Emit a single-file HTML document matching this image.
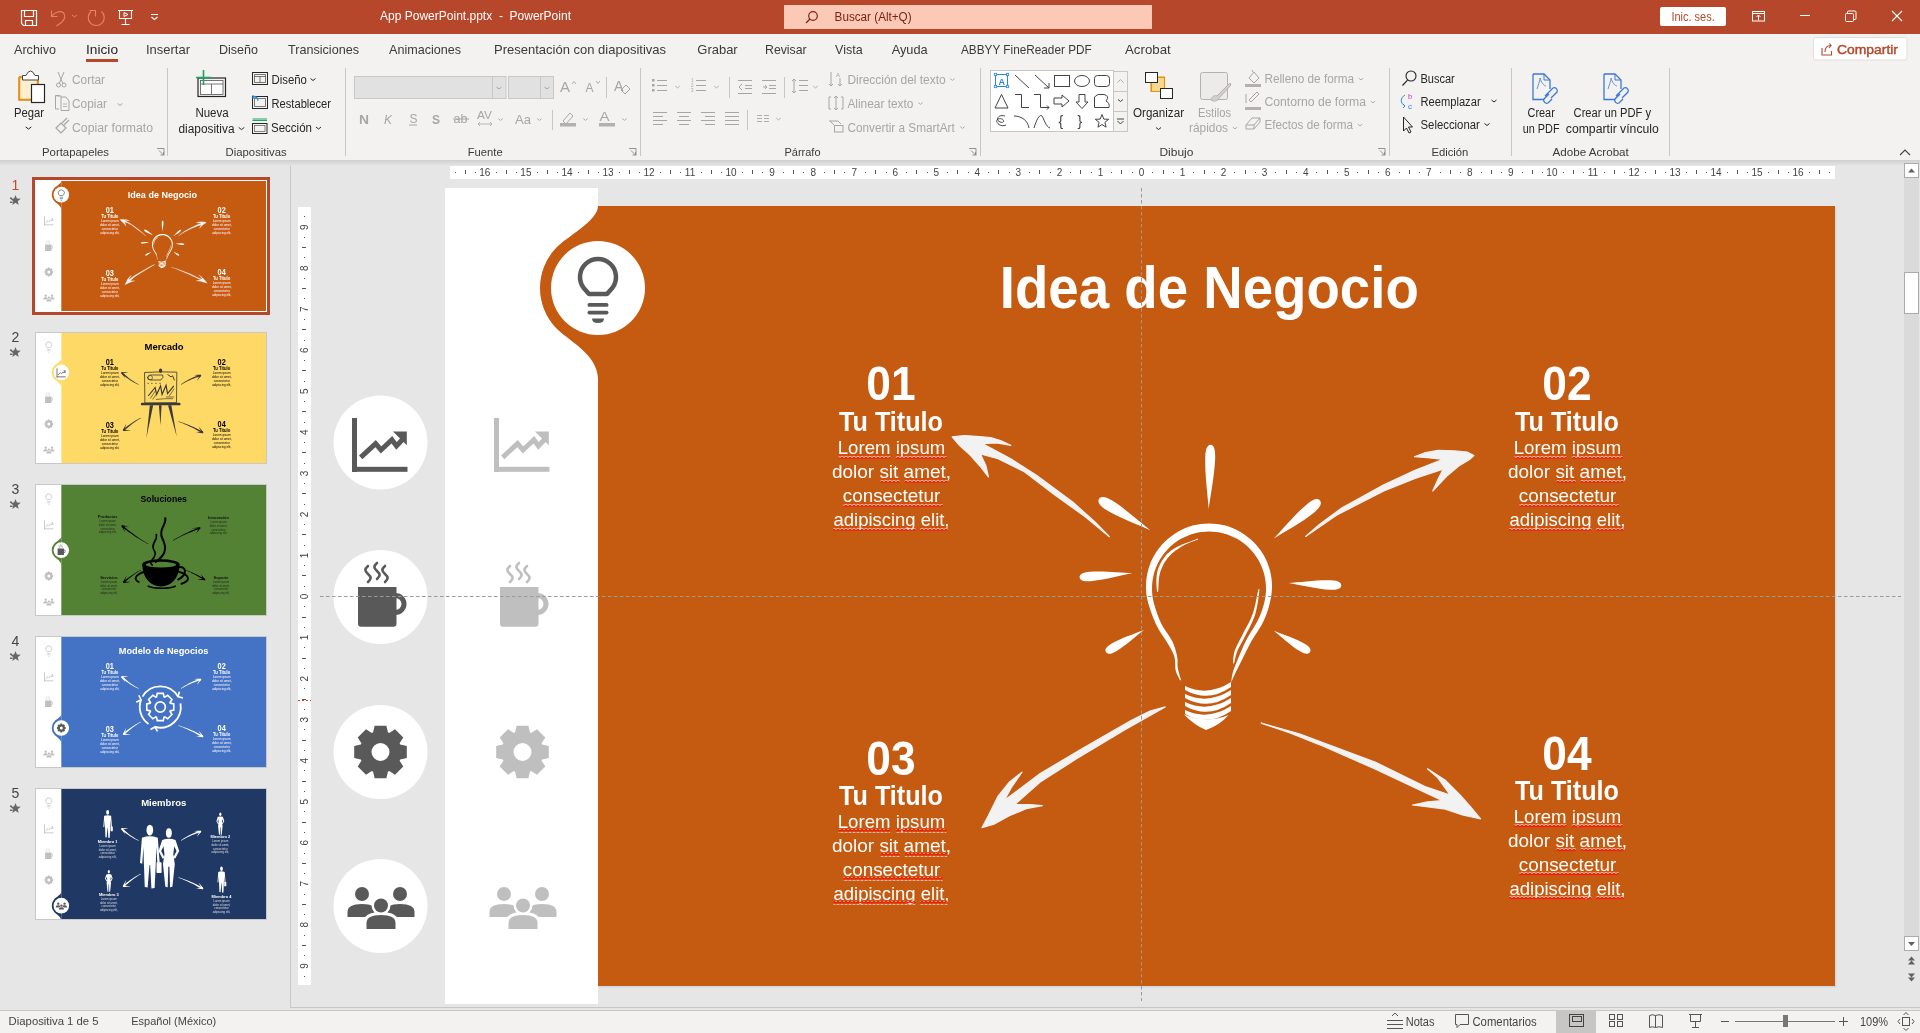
<!DOCTYPE html>
<html><head><meta charset="utf-8"><title>App PowerPoint</title>
<style>*{margin:0;padding:0}html,body{width:1920px;height:1033px;overflow:hidden;background:#E6E6E6;font-family:"Liberation Sans",sans-serif}</style>
</head><body><svg width="1920" height="1033" viewBox="0 0 1920 1033" style="position:absolute;left:0;top:0;will-change:transform"><defs>
<linearGradient id="shd" x1="0" y1="0" x2="0" y2="1"><stop offset="0" stop-color="#CFCFCF"/><stop offset="1" stop-color="#E6E6E6"/></linearGradient>
<pattern id="sq" width="4" height="4" patternUnits="userSpaceOnUse"><path d="M0 1.5 L2 0 L4 1.5" fill="none" stroke="#F6D9C8" stroke-width="0.9"/><path d="M0 3 L2 1.5 L4 3" fill="none" stroke="#FF1010" stroke-width="1.1"/></pattern>
<clipPath id="slc"><rect x="445" y="206" width="1390" height="780"/></clipPath>
<g id="s1"><rect x="445" y="206" width="1390" height="780" fill="#C55A11" /><rect x="445" y="206" width="153" height="780" fill="#FFFFFF" /><path d="M598 206 C598 221 566 237 556 248 A58 58 0 0 0 556 328 C566 339 598 354 598 379 Z" fill="#C55A11" /><circle cx="598" cy="288" r="47" fill="#FFFFFF" /><g transform="translate(598,277) scale(1)"><path d="M-9 17 L-14.5 10.7 A18 18 0 1 1 14.5 10.7 L9 17 Z" fill="none" stroke="#595959" stroke-width="4.5" stroke-linejoin="round"/><rect x="-10.5" y="26" width="21" height="3.8" fill="#595959" rx="1.9" /><rect x="-10.5" y="33.7" width="21" height="3.8" fill="#595959" rx="1.9" /><path d="M-6 41.5 H6 Q6 46 0 46 Q-6 46 -6 41.5 Z" fill="#595959" /></g><g transform="translate(522.5,442.5) scale(1)"><rect x="-28.5" y="-24.5" width="5" height="54" fill="#BFBFBF" /><rect x="-28.5" y="24.3" width="55.5" height="5" fill="#BFBFBF" /><path d="M-19.8 14.8 L-4.9 1.2 L0.5 7.5 L11.4 -2.8 L16 3.4 L22 -3" fill="none" stroke="#BFBFBF" stroke-width="5" stroke-linejoin="miter"/><path d="M12.5 -11 H26.3 V2.8 Z" fill="#BFBFBF" /></g><g transform="translate(522.5,597) scale(1)"><path d="M-22.5 -10 H16 V26.7 Q16 29.7 13 29.7 H-19.5 Q-22.5 29.7 -22.5 26.7 Z" fill="#BFBFBF" /><path d="M15 -1.5 A8.5 8.5 0 0 1 15 15.5" fill="none" stroke="#BFBFBF" stroke-width="5" /><path d="M-12.5 -15 C-9.0 -18 -9.0 -20 -12.5 -23 C-16.0 -26 -16.0 -28 -12.5 -31" fill="none" stroke="#BFBFBF" stroke-width="2.6" stroke-linecap="round"/><path d="M-3.5 -18 C0.0 -21 0.0 -23 -3.5 -26 C-7.0 -29 -7.0 -31 -3.5 -34" fill="none" stroke="#BFBFBF" stroke-width="2.6" stroke-linecap="round"/><path d="M4.5 -15 C8.0 -18 8.0 -20 4.5 -23 C1.0 -26 1.0 -28 4.5 -31" fill="none" stroke="#BFBFBF" stroke-width="2.6" stroke-linecap="round"/></g><g transform="translate(522.5,752) scale(1)"><path d="M19.7 -7.4 L26.3 -5.9 L26.3 5.9 L19.7 7.4 L19.1 8.7 L22.8 14.5 L14.5 22.8 L8.7 19.1 L7.4 19.7 L5.9 26.3 L-5.9 26.3 L-7.4 19.7 L-8.7 19.1 L-14.5 22.8 L-22.8 14.5 L-19.1 8.7 L-19.7 7.4 L-26.3 5.9 L-26.3 -5.9 L-19.7 -7.4 L-19.1 -8.7 L-22.8 -14.5 L-14.5 -22.8 L-8.7 -19.1 L-7.4 -19.7 L-5.9 -26.3 L5.9 -26.3 L7.4 -19.7 L8.7 -19.1 L14.5 -22.8 L22.8 -14.5 L19.1 -8.7 Z M9 0 A9 9 0 1 0 -9 0 A9 9 0 1 0 9 0 Z" fill="#BFBFBF" fill-rule="evenodd"/></g><g transform="translate(522.5,906) scale(1)"><circle cx="-18.5" cy="-12" r="7" fill="#BFBFBF" /><circle cx="19.5" cy="-12" r="7" fill="#BFBFBF" /><path d="M-33 11 V6 Q-33 -2 -18.5 -2 Q-4 -2 -4 6 V11 Z" fill="#BFBFBF" /><path d="M5 11 V6 Q5 -2 19.5 -2 Q34 -2 34 6 V11 Z" fill="#BFBFBF" /><circle cx="0.5" cy="-0.5" r="9.5" fill="#FFFFFF" /><path d="M-17 24 V17 Q-17 6 0.5 6 Q18 6 18 17 V24 Z" fill="#FFFFFF" /><circle cx="0.5" cy="-0.5" r="7" fill="#BFBFBF" /><path d="M-14 23 V17 Q-14 9 0.5 9 Q15 9 15 17 V23 Z" fill="#BFBFBF" /></g><text x="999.8" y="308.3" font-size="59.5" fill="#FFFFFF" font-family='"Liberation Sans", sans-serif' font-weight="bold" textLength="419" lengthAdjust="spacingAndGlyphs" >Idea de Negocio</text><text x="891" y="400.3" font-size="49" fill="#FFFFFF" font-family='"Liberation Sans", sans-serif' font-weight="bold" text-anchor="middle" textLength="49.3" lengthAdjust="spacingAndGlyphs" >01</text><text x="891" y="430.8" font-size="27" fill="#FFFFFF" font-family='"Liberation Sans", sans-serif' font-weight="bold" text-anchor="middle" textLength="104" lengthAdjust="spacingAndGlyphs" >Tu Titulo</text><text x="891.5" y="453.5" font-size="18.5" fill="#FFFFFF" font-family='"Liberation Sans", sans-serif' text-anchor="middle" textLength="107.5" lengthAdjust="spacingAndGlyphs" >Lorem ipsum</text><text x="891.5" y="477.5" font-size="18.5" fill="#FFFFFF" font-family='"Liberation Sans", sans-serif' text-anchor="middle" textLength="119" lengthAdjust="spacingAndGlyphs" >dolor sit amet,</text><text x="891.5" y="501.5" font-size="18.5" fill="#FFFFFF" font-family='"Liberation Sans", sans-serif' text-anchor="middle" textLength="97.6" lengthAdjust="spacingAndGlyphs" >consectetur</text><text x="891.5" y="525.5" font-size="18.5" fill="#FFFFFF" font-family='"Liberation Sans", sans-serif' text-anchor="middle" textLength="116" lengthAdjust="spacingAndGlyphs" >adipiscing elit,</text><rect x="838.5" y="454.8" width="51.7" height="4" fill="url(#sq)"/><rect x="895.8" y="454.8" width="50.6" height="4" fill="url(#sq)"/><rect x="880.5" y="478.8" width="19.3" height="4" fill="url(#sq)"/><rect x="904.7" y="478.8" width="42.7" height="4" fill="url(#sq)"/><rect x="843.2" y="502.8" width="99.3" height="4" fill="url(#sq)"/><rect x="833.5" y="526.8" width="82.0" height="4" fill="url(#sq)"/><rect x="919.9" y="526.8" width="27.9" height="4" fill="url(#sq)"/><text x="1567" y="400.3" font-size="49" fill="#FFFFFF" font-family='"Liberation Sans", sans-serif' font-weight="bold" text-anchor="middle" textLength="49.3" lengthAdjust="spacingAndGlyphs" >02</text><text x="1567" y="430.8" font-size="27" fill="#FFFFFF" font-family='"Liberation Sans", sans-serif' font-weight="bold" text-anchor="middle" textLength="104" lengthAdjust="spacingAndGlyphs" >Tu Titulo</text><text x="1567.5" y="453.5" font-size="18.5" fill="#FFFFFF" font-family='"Liberation Sans", sans-serif' text-anchor="middle" textLength="107.5" lengthAdjust="spacingAndGlyphs" >Lorem ipsum</text><text x="1567.5" y="477.5" font-size="18.5" fill="#FFFFFF" font-family='"Liberation Sans", sans-serif' text-anchor="middle" textLength="119" lengthAdjust="spacingAndGlyphs" >dolor sit amet,</text><text x="1567.5" y="501.5" font-size="18.5" fill="#FFFFFF" font-family='"Liberation Sans", sans-serif' text-anchor="middle" textLength="97.6" lengthAdjust="spacingAndGlyphs" >consectetur</text><text x="1567.5" y="525.5" font-size="18.5" fill="#FFFFFF" font-family='"Liberation Sans", sans-serif' text-anchor="middle" textLength="116" lengthAdjust="spacingAndGlyphs" >adipiscing elit,</text><rect x="1514.5" y="454.8" width="51.7" height="4" fill="url(#sq)"/><rect x="1571.8" y="454.8" width="50.6" height="4" fill="url(#sq)"/><rect x="1556.5" y="478.8" width="19.3" height="4" fill="url(#sq)"/><rect x="1580.7" y="478.8" width="42.7" height="4" fill="url(#sq)"/><rect x="1519.2" y="502.8" width="99.3" height="4" fill="url(#sq)"/><rect x="1509.5" y="526.8" width="82.0" height="4" fill="url(#sq)"/><rect x="1595.9" y="526.8" width="27.9" height="4" fill="url(#sq)"/><text x="891" y="774.5" font-size="49" fill="#FFFFFF" font-family='"Liberation Sans", sans-serif' font-weight="bold" text-anchor="middle" textLength="49.3" lengthAdjust="spacingAndGlyphs" >03</text><text x="891" y="805.0" font-size="27" fill="#FFFFFF" font-family='"Liberation Sans", sans-serif' font-weight="bold" text-anchor="middle" textLength="104" lengthAdjust="spacingAndGlyphs" >Tu Titulo</text><text x="891.5" y="827.7" font-size="18.5" fill="#FFFFFF" font-family='"Liberation Sans", sans-serif' text-anchor="middle" textLength="107.5" lengthAdjust="spacingAndGlyphs" >Lorem ipsum</text><text x="891.5" y="851.7" font-size="18.5" fill="#FFFFFF" font-family='"Liberation Sans", sans-serif' text-anchor="middle" textLength="119" lengthAdjust="spacingAndGlyphs" >dolor sit amet,</text><text x="891.5" y="875.7" font-size="18.5" fill="#FFFFFF" font-family='"Liberation Sans", sans-serif' text-anchor="middle" textLength="97.6" lengthAdjust="spacingAndGlyphs" >consectetur</text><text x="891.5" y="899.7" font-size="18.5" fill="#FFFFFF" font-family='"Liberation Sans", sans-serif' text-anchor="middle" textLength="116" lengthAdjust="spacingAndGlyphs" >adipiscing elit,</text><rect x="838.5" y="829.0" width="51.7" height="4" fill="url(#sq)"/><rect x="895.8" y="829.0" width="50.6" height="4" fill="url(#sq)"/><rect x="880.5" y="853.0" width="19.3" height="4" fill="url(#sq)"/><rect x="904.7" y="853.0" width="42.7" height="4" fill="url(#sq)"/><rect x="843.2" y="877.0" width="99.3" height="4" fill="url(#sq)"/><rect x="833.5" y="901.0" width="82.0" height="4" fill="url(#sq)"/><rect x="919.9" y="901.0" width="27.9" height="4" fill="url(#sq)"/><text x="1567" y="769.5" font-size="49" fill="#FFFFFF" font-family='"Liberation Sans", sans-serif' font-weight="bold" text-anchor="middle" textLength="49.3" lengthAdjust="spacingAndGlyphs" >04</text><text x="1567" y="800.0" font-size="27" fill="#FFFFFF" font-family='"Liberation Sans", sans-serif' font-weight="bold" text-anchor="middle" textLength="104" lengthAdjust="spacingAndGlyphs" >Tu Titulo</text><text x="1567.5" y="822.7" font-size="18.5" fill="#FFFFFF" font-family='"Liberation Sans", sans-serif' text-anchor="middle" textLength="107.5" lengthAdjust="spacingAndGlyphs" >Lorem ipsum</text><text x="1567.5" y="846.7" font-size="18.5" fill="#FFFFFF" font-family='"Liberation Sans", sans-serif' text-anchor="middle" textLength="119" lengthAdjust="spacingAndGlyphs" >dolor sit amet,</text><text x="1567.5" y="870.7" font-size="18.5" fill="#FFFFFF" font-family='"Liberation Sans", sans-serif' text-anchor="middle" textLength="97.6" lengthAdjust="spacingAndGlyphs" >consectetur</text><text x="1567.5" y="894.7" font-size="18.5" fill="#FFFFFF" font-family='"Liberation Sans", sans-serif' text-anchor="middle" textLength="116" lengthAdjust="spacingAndGlyphs" >adipiscing elit,</text><rect x="1514.5" y="824.0" width="51.7" height="4" fill="url(#sq)"/><rect x="1571.8" y="824.0" width="50.6" height="4" fill="url(#sq)"/><rect x="1556.5" y="848.0" width="19.3" height="4" fill="url(#sq)"/><rect x="1580.7" y="848.0" width="42.7" height="4" fill="url(#sq)"/><rect x="1519.2" y="872.0" width="99.3" height="4" fill="url(#sq)"/><rect x="1509.5" y="896.0" width="82.0" height="4" fill="url(#sq)"/><rect x="1595.9" y="896.0" width="27.9" height="4" fill="url(#sq)"/><path d="M1180.0 680.2 C1179.3 678.5 1176.5 674.1 1175.6 670.2 C1174.7 666.3 1175.8 661.4 1174.5 656.9 C1173.2 652.4 1170.8 648.7 1167.8 643.5 C1164.8 638.3 1160.0 632.5 1156.7 625.7 C1153.4 618.9 1149.9 609.3 1148.1 602.8 C1146.4 596.3 1146.0 591.9 1146.0 586.5 C1146.0 581.1 1146.7 575.4 1148.1 570.2 C1149.6 564.9 1151.7 559.7 1154.4 555.0 C1157.2 550.3 1160.6 545.8 1164.5 542.0 C1168.3 538.1 1172.8 534.7 1177.5 531.9 C1182.2 529.2 1187.4 527.1 1192.7 525.6 C1197.9 524.2 1203.6 523.5 1209.0 523.5 C1214.4 523.5 1220.1 524.2 1225.3 525.6 C1230.6 527.1 1235.8 529.2 1240.5 531.9 C1245.2 534.7 1249.7 538.1 1253.5 542.0 C1257.4 545.8 1260.8 550.3 1263.6 555.0 C1266.3 559.7 1268.4 564.9 1269.9 570.2 C1271.3 575.4 1272.0 581.1 1272.0 586.5 C1272.0 591.9 1271.3 597.0 1269.9 602.8 C1268.4 608.6 1266.8 614.5 1263.5 621.3 C1260.2 628.1 1253.9 636.8 1250.2 643.5 C1246.5 650.2 1243.9 656.1 1241.3 661.3 C1238.7 666.5 1236.3 671.2 1234.6 674.7 C1232.9 678.2 1231.8 681.2 1231.2 682.5 L1231.2 682.5 C1231.5 680.8 1231.7 676.3 1232.8 672.4 C1233.9 668.5 1235.8 664.3 1237.9 659.1 C1240.1 653.9 1242.4 647.8 1245.7 641.3 C1249.0 634.8 1254.9 626.4 1258.0 620.1 C1261.1 613.8 1262.7 608.5 1264.1 603.3 C1265.4 598.0 1266.0 593.4 1266.0 588.5 C1266.0 583.6 1265.3 578.5 1264.1 573.7 C1262.8 569.0 1260.8 564.3 1258.4 560.0 C1255.9 555.7 1252.8 551.7 1249.3 548.2 C1245.8 544.7 1241.8 541.6 1237.5 539.1 C1233.2 536.7 1228.5 534.7 1223.8 533.4 C1219.0 532.2 1213.9 531.5 1209.0 531.5 C1204.1 531.5 1199.0 532.2 1194.2 533.4 C1189.5 534.7 1184.8 536.7 1180.5 539.1 C1176.2 541.6 1172.2 544.7 1168.7 548.2 C1165.2 551.7 1162.1 555.7 1159.6 560.0 C1157.2 564.3 1155.2 569.0 1153.9 573.7 C1152.7 578.5 1152.0 583.6 1152.0 588.5 C1152.0 593.4 1152.4 597.4 1153.9 603.3 C1155.5 609.1 1158.1 617.2 1161.2 623.5 C1164.3 629.8 1169.6 635.7 1172.3 641.3 C1175.0 646.9 1176.3 652.4 1177.2 656.9 C1178.1 661.4 1177.1 664.1 1177.8 668.0 C1178.5 671.9 1180.6 678.2 1181.2 680.2 Z" fill="#FFFFFF" /><path d="M1157.9 592.0 L1158.3 589.9 L1158.4 587.0 L1158.6 583.5 L1158.8 579.9 L1159.2 576.4 L1159.9 573.3 L1160.8 570.6 L1161.9 567.8 L1163.1 565.2 L1164.5 562.6 L1166.1 560.2 L1167.7 558.0 L1169.5 556.0 L1171.4 554.1 L1173.4 552.3 L1175.6 550.6 L1178.0 548.9 L1180.4 547.3 L1183.3 545.6 L1186.5 543.9 L1190.0 542.5 L1193.3 541.2 L1196.1 540.2 L1198.1 539.4 L1197.9 538.6 L1195.8 539.4 L1193.0 540.5 L1189.7 541.7 L1186.2 543.1 L1182.6 544.3 L1179.6 545.7 L1176.9 547.1 L1174.3 548.6 L1171.8 550.1 L1169.5 551.9 L1167.3 553.8 L1165.3 556.0 L1163.5 558.4 L1161.8 561.0 L1160.3 563.8 L1159.0 566.6 L1157.9 569.6 L1157.1 572.7 L1156.6 576.0 L1156.4 579.7 L1156.4 583.5 L1156.6 587.0 L1156.8 589.9 L1157.1 592.0 Z" fill="#FFFFFF" /><path d="M1258.6 588.9 L1257.9 591.7 L1257.1 595.5 L1256.2 600.0 L1255.2 604.8 L1254.0 609.5 L1252.8 613.6 L1251.4 617.3 L1249.7 620.9 L1247.9 624.4 L1246.1 627.8 L1244.3 631.1 L1242.7 634.3 L1241.2 637.3 L1239.7 640.1 L1238.3 642.9 L1236.9 645.5 L1235.8 648.0 L1234.8 650.6 L1234.1 653.1 L1233.6 655.7 L1233.3 658.1 L1233.1 660.3 L1233.1 662.1 L1233.1 663.4 L1233.9 663.6 L1234.4 662.3 L1234.8 660.5 L1235.2 658.4 L1235.7 656.1 L1236.4 653.7 L1237.2 651.4 L1238.2 649.1 L1239.4 646.7 L1240.8 644.2 L1242.3 641.5 L1243.8 638.7 L1245.3 635.7 L1246.9 632.5 L1248.7 629.2 L1250.5 625.7 L1252.2 622.1 L1253.8 618.3 L1255.2 614.4 L1256.3 610.1 L1257.3 605.3 L1258.1 600.4 L1258.7 595.8 L1259.2 591.9 L1259.4 589.1 Z" fill="#FFFFFF" /><path d="M1185 686 Q1208 697 1231 682 V687 Q1208 703 1185 690 Z" fill="#FFFFFF" /><path d="M1185 694 Q1208 705 1231 690 V695 Q1208 711 1185 698 Z" fill="#FFFFFF" /><path d="M1185 702 Q1208 713 1231 698 V703 Q1208 719 1185 706 Z" fill="#FFFFFF" /><path d="M1185 710 Q1208 721 1231 706 V711 Q1208 727 1185 714 Z" fill="#FFFFFF" /><path d="M1184 714.5 Q1207 724 1228.6 715 Q1220 725 1206 730 Q1194 725 1184 714.5 Z" fill="#FFFFFF" /><path d="M1210.6 444.7 C1207.6 444.6 1205.5 448.4 1205.2 457.4 C1204.7 473.5 1207.8 496.1 1208.7 509.0 C1210.3 496.2 1214.7 473.8 1215.2 457.7 C1215.5 448.7 1213.6 444.8 1210.6 444.7 Z" fill="#FFFFFF" /><path d="M1099.0 499.0 C1097.3 501.8 1099.2 505.6 1106.4 510.0 C1119.3 517.8 1139.4 525.2 1150.4 530.3 C1140.8 522.9 1125.0 508.4 1112.1 500.6 C1104.9 496.2 1100.7 496.2 1099.0 499.0 Z" fill="#FFFFFF" /><path d="M1320.0 500.6 C1317.9 498.0 1313.7 498.6 1307.3 503.9 C1295.7 513.4 1282.2 529.9 1273.8 538.5 C1283.9 532.0 1302.7 521.9 1314.2 512.4 C1320.7 507.1 1322.1 503.2 1320.0 500.6 Z" fill="#FFFFFF" /><path d="M1079.6 577.3 C1079.8 580.1 1083.1 581.8 1090.5 581.2 C1103.7 580.1 1121.9 575.0 1132.3 573.0 C1121.7 572.7 1102.9 570.6 1089.8 571.7 C1082.4 572.3 1079.4 574.5 1079.6 577.3 Z" fill="#FFFFFF" /><path d="M1341.3 585.6 C1341.4 582.8 1338.4 580.7 1331.0 580.3 C1317.8 579.7 1299.2 582.3 1288.6 583.0 C1299.1 584.7 1317.4 589.2 1330.5 589.8 C1337.9 590.2 1341.2 588.4 1341.3 585.6 Z" fill="#FFFFFF" /><path d="M1106.0 652.0 C1107.4 654.3 1110.5 654.6 1115.8 651.5 C1125.3 646.0 1136.8 635.4 1143.8 630.0 C1135.7 633.4 1120.7 638.2 1111.3 643.7 C1106.0 646.8 1104.6 649.7 1106.0 652.0 Z" fill="#FFFFFF" /><path d="M1310.0 652.0 C1311.4 649.7 1310.1 646.8 1305.0 643.9 C1296.0 638.5 1281.6 634.0 1273.8 630.7 C1280.5 635.9 1291.4 646.3 1300.5 651.6 C1305.5 654.6 1308.6 654.3 1310.0 652.0 Z" fill="#FFFFFF" /><path d="M952.1 436.9 L964.2 435.5 L976.3 436.3 L990.8 437.5 L1000.5 440.6 L1010.8 445.4 L996.9 443.0 L982.3 443.6 L1012.6 459.9 L1036.8 475.6 L1073.0 502.3 L1095.0 522.0 L1109.4 536.7 L1085.2 516.8 L1054.9 495.0 L1024.7 472.0 L998.1 458.7 L980.5 453.9 L986.0 466.0 L988.4 476.9 L979.9 466.0 L970.2 455.1 L959.4 445.4 Z" fill="#F2F2F2" stroke="#F2F2F2" stroke-width="1.2" stroke-linejoin="round"/><path d="M1473.9 455.6 L1467.1 452.0 L1454.6 450.9 L1437.9 450.4 L1425.4 452.5 L1414.5 456.7 L1427.5 457.7 L1443.1 459.3 L1415.0 470.2 L1383.8 484.8 L1342.1 507.7 L1320.0 524.0 L1305.6 536.4 L1336.9 515.0 L1383.8 491.0 L1415.0 478.5 L1443.1 469.2 L1437.9 479.6 L1432.7 491.0 L1446.3 476.5 L1458.8 466.0 L1469.2 459.8 Z" fill="#F2F2F2" stroke="#F2F2F2" stroke-width="1.2" stroke-linejoin="round"/><path d="M981.9 827.7 L988.3 815.8 L998.1 796.1 L1009.3 782.1 L1022.0 772.2 L1012.1 786.3 L1004.4 800.3 L1040.2 773.6 L1082.3 748.4 L1131.5 720.3 L1150.0 711.0 L1165.2 706.9 L1124.5 730.1 L1075.3 759.6 L1040.2 782.1 L1014.9 804.5 L1029.0 804.5 L1042.3 805.6 L1026.2 808.7 L1009.3 815.8 L993.9 824.2 Z" fill="#F2F2F2" stroke="#F2F2F2" stroke-width="1.2" stroke-linejoin="round"/><path d="M1261.2 723.1 L1300.0 734.0 L1375.0 762.0 L1425.0 786.5 L1450.0 795.0 L1437.5 777.5 L1427.5 768.8 L1445.0 780.0 L1460.0 795.0 L1470.0 806.2 L1480.6 818.8 L1462.5 815.0 L1443.8 808.8 L1412.5 805.0 L1427.5 801.9 L1442.5 800.6 L1375.0 769.0 L1325.0 747.0 L1290.0 733.0 Z" fill="#F2F2F2" stroke="#F2F2F2" stroke-width="1.2" stroke-linejoin="round"/></g>
<g id="s2"><rect x="445" y="206" width="1390" height="780" fill="#FFD966" /><rect x="445" y="206" width="153" height="780" fill="#FFFFFF" /><path d="M598 360.5 C598 375.5 566 391.5 556 402.5 A58 58 0 0 0 556 482.5 C566 493.5 598 508.5 598 533.5 Z" fill="#FFD966" /><circle cx="598" cy="442.5" r="47" fill="#FFFFFF" /><g transform="translate(522.5,277) scale(1)"><path d="M-9 17 L-14.5 10.7 A18 18 0 1 1 14.5 10.7 L9 17 Z" fill="none" stroke="#BFBFBF" stroke-width="4.5" stroke-linejoin="round"/><rect x="-10.5" y="26" width="21" height="3.8" fill="#BFBFBF" rx="1.9" /><rect x="-10.5" y="33.7" width="21" height="3.8" fill="#BFBFBF" rx="1.9" /><path d="M-6 41.5 H6 Q6 46 0 46 Q-6 46 -6 41.5 Z" fill="#BFBFBF" /></g><g transform="translate(598,442.5) scale(1)"><rect x="-28.5" y="-24.5" width="5" height="54" fill="#595959" /><rect x="-28.5" y="24.3" width="55.5" height="5" fill="#595959" /><path d="M-19.8 14.8 L-4.9 1.2 L0.5 7.5 L11.4 -2.8 L16 3.4 L22 -3" fill="none" stroke="#595959" stroke-width="5" stroke-linejoin="miter"/><path d="M12.5 -11 H26.3 V2.8 Z" fill="#595959" /></g><g transform="translate(522.5,597) scale(1)"><path d="M-22.5 -10 H16 V26.7 Q16 29.7 13 29.7 H-19.5 Q-22.5 29.7 -22.5 26.7 Z" fill="#BFBFBF" /><path d="M15 -1.5 A8.5 8.5 0 0 1 15 15.5" fill="none" stroke="#BFBFBF" stroke-width="5" /><path d="M-12.5 -15 C-9.0 -18 -9.0 -20 -12.5 -23 C-16.0 -26 -16.0 -28 -12.5 -31" fill="none" stroke="#BFBFBF" stroke-width="2.6" stroke-linecap="round"/><path d="M-3.5 -18 C0.0 -21 0.0 -23 -3.5 -26 C-7.0 -29 -7.0 -31 -3.5 -34" fill="none" stroke="#BFBFBF" stroke-width="2.6" stroke-linecap="round"/><path d="M4.5 -15 C8.0 -18 8.0 -20 4.5 -23 C1.0 -26 1.0 -28 4.5 -31" fill="none" stroke="#BFBFBF" stroke-width="2.6" stroke-linecap="round"/></g><g transform="translate(522.5,752) scale(1)"><path d="M19.7 -7.4 L26.3 -5.9 L26.3 5.9 L19.7 7.4 L19.1 8.7 L22.8 14.5 L14.5 22.8 L8.7 19.1 L7.4 19.7 L5.9 26.3 L-5.9 26.3 L-7.4 19.7 L-8.7 19.1 L-14.5 22.8 L-22.8 14.5 L-19.1 8.7 L-19.7 7.4 L-26.3 5.9 L-26.3 -5.9 L-19.7 -7.4 L-19.1 -8.7 L-22.8 -14.5 L-14.5 -22.8 L-8.7 -19.1 L-7.4 -19.7 L-5.9 -26.3 L5.9 -26.3 L7.4 -19.7 L8.7 -19.1 L14.5 -22.8 L22.8 -14.5 L19.1 -8.7 Z M9 0 A9 9 0 1 0 -9 0 A9 9 0 1 0 9 0 Z" fill="#BFBFBF" fill-rule="evenodd"/></g><g transform="translate(522.5,906) scale(1)"><circle cx="-18.5" cy="-12" r="7" fill="#BFBFBF" /><circle cx="19.5" cy="-12" r="7" fill="#BFBFBF" /><path d="M-33 11 V6 Q-33 -2 -18.5 -2 Q-4 -2 -4 6 V11 Z" fill="#BFBFBF" /><path d="M5 11 V6 Q5 -2 19.5 -2 Q34 -2 34 6 V11 Z" fill="#BFBFBF" /><circle cx="0.5" cy="-0.5" r="9.5" fill="#FFFFFF" /><path d="M-17 24 V17 Q-17 6 0.5 6 Q18 6 18 17 V24 Z" fill="#FFFFFF" /><circle cx="0.5" cy="-0.5" r="7" fill="#BFBFBF" /><path d="M-14 23 V17 Q-14 9 0.5 9 Q15 9 15 17 V23 Z" fill="#BFBFBF" /></g><text x="1219" y="308" font-size="59.5" fill="#000000" font-family='"Liberation Sans", sans-serif' font-weight="bold" text-anchor="middle" textLength="236" lengthAdjust="spacingAndGlyphs" >Mercado</text><text x="891" y="400" font-size="49" fill="#000000" font-family='"Liberation Sans", sans-serif' font-weight="bold" text-anchor="middle" textLength="49.3" lengthAdjust="spacingAndGlyphs" >01</text><text x="891" y="430.5" font-size="27" fill="#000000" font-family='"Liberation Sans", sans-serif' font-weight="bold" text-anchor="middle" textLength="104" lengthAdjust="spacingAndGlyphs" >Tu Titulo</text><text x="891.5" y="453.2" font-size="18.5" fill="#000000" font-family='"Liberation Sans", sans-serif' text-anchor="middle" textLength="107.5" lengthAdjust="spacingAndGlyphs" >Lorem ipsum</text><text x="891.5" y="477.2" font-size="18.5" fill="#000000" font-family='"Liberation Sans", sans-serif' text-anchor="middle" textLength="119" lengthAdjust="spacingAndGlyphs" >dolor sit amet,</text><text x="891.5" y="501.2" font-size="18.5" fill="#000000" font-family='"Liberation Sans", sans-serif' text-anchor="middle" textLength="97.6" lengthAdjust="spacingAndGlyphs" >consectetur</text><text x="891.5" y="525.2" font-size="18.5" fill="#000000" font-family='"Liberation Sans", sans-serif' text-anchor="middle" textLength="116" lengthAdjust="spacingAndGlyphs" >adipiscing elit,</text><text x="1567" y="400" font-size="49" fill="#000000" font-family='"Liberation Sans", sans-serif' font-weight="bold" text-anchor="middle" textLength="49.3" lengthAdjust="spacingAndGlyphs" >02</text><text x="1567" y="430.5" font-size="27" fill="#000000" font-family='"Liberation Sans", sans-serif' font-weight="bold" text-anchor="middle" textLength="104" lengthAdjust="spacingAndGlyphs" >Tu Titulo</text><text x="1567.5" y="453.2" font-size="18.5" fill="#000000" font-family='"Liberation Sans", sans-serif' text-anchor="middle" textLength="107.5" lengthAdjust="spacingAndGlyphs" >Lorem ipsum</text><text x="1567.5" y="477.2" font-size="18.5" fill="#000000" font-family='"Liberation Sans", sans-serif' text-anchor="middle" textLength="119" lengthAdjust="spacingAndGlyphs" >dolor sit amet,</text><text x="1567.5" y="501.2" font-size="18.5" fill="#000000" font-family='"Liberation Sans", sans-serif' text-anchor="middle" textLength="97.6" lengthAdjust="spacingAndGlyphs" >consectetur</text><text x="1567.5" y="525.2" font-size="18.5" fill="#000000" font-family='"Liberation Sans", sans-serif' text-anchor="middle" textLength="116" lengthAdjust="spacingAndGlyphs" >adipiscing elit,</text><text x="891" y="774" font-size="49" fill="#000000" font-family='"Liberation Sans", sans-serif' font-weight="bold" text-anchor="middle" textLength="49.3" lengthAdjust="spacingAndGlyphs" >03</text><text x="891" y="804.5" font-size="27" fill="#000000" font-family='"Liberation Sans", sans-serif' font-weight="bold" text-anchor="middle" textLength="104" lengthAdjust="spacingAndGlyphs" >Tu Titulo</text><text x="891.5" y="827.2" font-size="18.5" fill="#000000" font-family='"Liberation Sans", sans-serif' text-anchor="middle" textLength="107.5" lengthAdjust="spacingAndGlyphs" >Lorem ipsum</text><text x="891.5" y="851.2" font-size="18.5" fill="#000000" font-family='"Liberation Sans", sans-serif' text-anchor="middle" textLength="119" lengthAdjust="spacingAndGlyphs" >dolor sit amet,</text><text x="891.5" y="875.2" font-size="18.5" fill="#000000" font-family='"Liberation Sans", sans-serif' text-anchor="middle" textLength="97.6" lengthAdjust="spacingAndGlyphs" >consectetur</text><text x="891.5" y="899.2" font-size="18.5" fill="#000000" font-family='"Liberation Sans", sans-serif' text-anchor="middle" textLength="116" lengthAdjust="spacingAndGlyphs" >adipiscing elit,</text><text x="1567" y="769" font-size="49" fill="#000000" font-family='"Liberation Sans", sans-serif' font-weight="bold" text-anchor="middle" textLength="49.3" lengthAdjust="spacingAndGlyphs" >04</text><text x="1567" y="799.5" font-size="27" fill="#000000" font-family='"Liberation Sans", sans-serif' font-weight="bold" text-anchor="middle" textLength="104" lengthAdjust="spacingAndGlyphs" >Tu Titulo</text><text x="1567.5" y="822.2" font-size="18.5" fill="#000000" font-family='"Liberation Sans", sans-serif' text-anchor="middle" textLength="107.5" lengthAdjust="spacingAndGlyphs" >Lorem ipsum</text><text x="1567.5" y="846.2" font-size="18.5" fill="#000000" font-family='"Liberation Sans", sans-serif' text-anchor="middle" textLength="119" lengthAdjust="spacingAndGlyphs" >dolor sit amet,</text><text x="1567.5" y="870.2" font-size="18.5" fill="#000000" font-family='"Liberation Sans", sans-serif' text-anchor="middle" textLength="97.6" lengthAdjust="spacingAndGlyphs" >consectetur</text><text x="1567.5" y="894.2" font-size="18.5" fill="#000000" font-family='"Liberation Sans", sans-serif' text-anchor="middle" textLength="116" lengthAdjust="spacingAndGlyphs" >adipiscing elit,</text><path d="M1101 443 Q1200 436 1296 441 L1294 624 L1103 626 Z" fill="none" stroke="#3A3A3A" stroke-width="5" /><ellipse cx="1198" cy="432" rx="10" ry="13" fill="#3A3A3A"/><path d="M1118 470 Q1125 455 1150 458 H1210 Q1220 470 1200 488 H1140 Q1118 490 1118 470 Z" fill="none" stroke="#3A3A3A" stroke-width="5" /><circle cx="1136" cy="474" r="13" fill="none" stroke="#3A3A3A" stroke-width="4" /><path d="M1240 455 L1262 470 L1270 462 L1282 490" fill="none" stroke="#3A3A3A" stroke-width="6" /><path d="M1123 584 L1165 533 L1174 575 L1198 523 L1207 575 L1231 519 L1240 570 L1278 523" fill="none" stroke="#3A3A3A" stroke-width="7" /><path d="M1135 600 L1170 548 M1150 605 L1185 555 M1250 585 L1280 540" fill="none" stroke="#3A3A3A" stroke-width="4" /><path d="M1118 508 H1128 M1140 508 H1150 M1165 508 H1175 M1190 508 H1200 M1230 590 H1280 M1170 605 Q1220 598 1273 600" fill="none" stroke="#3A3A3A" stroke-width="4" /><rect x="1079" y="624" width="239" height="16" fill="#3A3A3A" rx="7" /><path d="M1133 640 L1153 640 L1112 838 Z" fill="#3A3A3A" /><path d="M1188 640 L1204 640 L1197 762 Z" fill="#3A3A3A" /><path d="M1243 640 L1263 640 L1296 830 Z" fill="#3A3A3A" /><path d="M1065.7 513.7 L1056.5 508.8 L1047.6 503.8 L1038.8 498.5 L1030.2 493.0 L1021.8 487.4 L1013.5 481.4 L1005.4 475.3 L997.5 469.0 L989.7 462.4 L982.1 455.6 L974.7 448.6 L967.4 441.4 L960.6 448.6 L968.4 455.6 L976.4 462.3 L984.5 468.8 L992.8 475.0 L1001.2 481.0 L1009.8 486.8 L1018.5 492.3 L1027.4 497.6 L1036.4 502.6 L1045.6 507.4 L1054.9 512.0 L1064.3 516.3 Z" fill="#3A3A3A" /><path d="M964.2 449.5 L973.7 448.0 L983.1 446.4 L992.6 444.9 L1002.0 443.4 L1002.0 442.6 L992.4 442.1 L982.9 441.6 L973.3 441.0 L963.8 440.5 Z" fill="#3A3A3A" /><path d="M960.2 447.4 L966.3 455.1 L972.4 462.8 L978.5 470.5 L984.7 478.2 L985.3 477.8 L981.0 469.0 L976.6 460.2 L972.2 451.4 L967.8 442.6 Z" fill="#3A3A3A" /><circle cx="964" cy="445" r="4.5" fill="#3A3A3A" /><path d="M1322.8 516.3 L1332.1 510.6 L1341.4 505.3 L1350.8 500.2 L1360.4 495.3 L1370.0 490.7 L1379.8 486.4 L1389.6 482.3 L1399.6 478.5 L1409.6 475.0 L1419.8 471.7 L1430.0 468.6 L1440.4 465.8 L1437.6 456.2 L1427.2 459.6 L1416.9 463.3 L1406.7 467.2 L1396.7 471.4 L1386.8 475.8 L1377.0 480.5 L1367.4 485.4 L1357.9 490.6 L1348.5 496.0 L1339.3 501.7 L1330.2 507.6 L1321.2 513.7 Z" fill="#3A3A3A" /><path d="M1439.3 456.5 L1429.0 456.8 L1418.7 457.1 L1408.4 457.3 L1398.0 457.6 L1398.0 458.4 L1408.1 460.2 L1418.3 461.9 L1428.5 463.7 L1438.7 465.5 Z" fill="#3A3A3A" /><path d="M1435.3 458.5 L1430.9 466.8 L1426.5 475.1 L1422.1 483.5 L1417.7 491.8 L1418.3 492.2 L1424.4 485.0 L1430.5 477.9 L1436.6 470.7 L1442.7 463.5 Z" fill="#3A3A3A" /><circle cx="1439" cy="461" r="4.5" fill="#3A3A3A" /><path d="M1077.3 714.7 L1067.7 719.6 L1058.3 724.7 L1049.0 730.0 L1039.8 735.5 L1030.7 741.2 L1021.8 747.1 L1013.0 753.2 L1004.3 759.4 L995.7 765.9 L987.2 772.5 L978.8 779.3 L970.7 786.3 L977.3 793.7 L985.1 786.4 L992.9 779.2 L1000.9 772.3 L1009.0 765.5 L1017.2 758.8 L1025.6 752.4 L1034.1 746.1 L1042.7 740.0 L1051.5 734.1 L1060.4 728.3 L1069.5 722.7 L1078.7 717.3 Z" fill="#3A3A3A" /><path d="M978.1 791.7 L981.2 781.8 L984.3 772.0 L987.3 762.1 L990.4 752.2 L989.6 751.8 L984.7 760.9 L979.7 770.0 L974.8 779.2 L969.9 788.3 Z" fill="#3A3A3A" /><path d="M974.0 794.5 L984.2 793.5 L994.5 792.5 L1004.8 791.4 L1015.0 790.4 L1015.0 789.6 L1004.8 788.6 L994.5 787.5 L984.2 786.5 L974.0 785.5 Z" fill="#3A3A3A" /><circle cx="974" cy="790" r="4.5" fill="#3A3A3A" /><path d="M1305.5 738.4 L1318.1 743.1 L1330.5 747.9 L1342.9 753.0 L1355.1 758.2 L1367.3 763.7 L1379.3 769.3 L1391.3 775.2 L1403.1 781.2 L1414.9 787.4 L1426.5 793.9 L1438.0 800.5 L1449.5 807.3 L1454.5 798.7 L1442.6 792.3 L1430.7 786.1 L1418.6 780.1 L1406.5 774.3 L1394.3 768.8 L1382.0 763.4 L1369.6 758.2 L1357.1 753.3 L1344.6 748.6 L1332.0 744.0 L1319.3 739.7 L1306.5 735.6 Z" fill="#3A3A3A" /><path d="M1452.3 798.5 L1441.2 798.8 L1430.2 799.1 L1419.1 799.3 L1408.0 799.6 L1408.0 800.4 L1418.9 802.2 L1429.8 803.9 L1440.8 805.7 L1451.7 807.5 Z" fill="#3A3A3A" /><path d="M1455.7 800.5 L1448.9 792.3 L1442.0 784.1 L1435.2 775.9 L1428.3 767.8 L1427.7 768.2 L1432.8 777.6 L1438.0 786.9 L1443.1 796.2 L1448.3 805.5 Z" fill="#3A3A3A" /><circle cx="1452" cy="803" r="4.5" fill="#3A3A3A" /></g>
<g id="s3"><rect x="445" y="206" width="1390" height="780" fill="#548235" /><rect x="445" y="206" width="153" height="780" fill="#FFFFFF" /><path d="M598 515 C598 530 566 546 556 557 A58 58 0 0 0 556 637 C566 648 598 663 598 688 Z" fill="#548235" /><circle cx="598" cy="597" r="47" fill="#FFFFFF" /><g transform="translate(522.5,277) scale(1)"><path d="M-9 17 L-14.5 10.7 A18 18 0 1 1 14.5 10.7 L9 17 Z" fill="none" stroke="#BFBFBF" stroke-width="4.5" stroke-linejoin="round"/><rect x="-10.5" y="26" width="21" height="3.8" fill="#BFBFBF" rx="1.9" /><rect x="-10.5" y="33.7" width="21" height="3.8" fill="#BFBFBF" rx="1.9" /><path d="M-6 41.5 H6 Q6 46 0 46 Q-6 46 -6 41.5 Z" fill="#BFBFBF" /></g><g transform="translate(522.5,442.5) scale(1)"><rect x="-28.5" y="-24.5" width="5" height="54" fill="#BFBFBF" /><rect x="-28.5" y="24.3" width="55.5" height="5" fill="#BFBFBF" /><path d="M-19.8 14.8 L-4.9 1.2 L0.5 7.5 L11.4 -2.8 L16 3.4 L22 -3" fill="none" stroke="#BFBFBF" stroke-width="5" stroke-linejoin="miter"/><path d="M12.5 -11 H26.3 V2.8 Z" fill="#BFBFBF" /></g><g transform="translate(598,597) scale(1)"><path d="M-22.5 -10 H16 V26.7 Q16 29.7 13 29.7 H-19.5 Q-22.5 29.7 -22.5 26.7 Z" fill="#595959" /><path d="M15 -1.5 A8.5 8.5 0 0 1 15 15.5" fill="none" stroke="#595959" stroke-width="5" /><path d="M-12.5 -15 C-9.0 -18 -9.0 -20 -12.5 -23 C-16.0 -26 -16.0 -28 -12.5 -31" fill="none" stroke="#595959" stroke-width="2.6" stroke-linecap="round"/><path d="M-3.5 -18 C0.0 -21 0.0 -23 -3.5 -26 C-7.0 -29 -7.0 -31 -3.5 -34" fill="none" stroke="#595959" stroke-width="2.6" stroke-linecap="round"/><path d="M4.5 -15 C8.0 -18 8.0 -20 4.5 -23 C1.0 -26 1.0 -28 4.5 -31" fill="none" stroke="#595959" stroke-width="2.6" stroke-linecap="round"/></g><g transform="translate(522.5,752) scale(1)"><path d="M19.7 -7.4 L26.3 -5.9 L26.3 5.9 L19.7 7.4 L19.1 8.7 L22.8 14.5 L14.5 22.8 L8.7 19.1 L7.4 19.7 L5.9 26.3 L-5.9 26.3 L-7.4 19.7 L-8.7 19.1 L-14.5 22.8 L-22.8 14.5 L-19.1 8.7 L-19.7 7.4 L-26.3 5.9 L-26.3 -5.9 L-19.7 -7.4 L-19.1 -8.7 L-22.8 -14.5 L-14.5 -22.8 L-8.7 -19.1 L-7.4 -19.7 L-5.9 -26.3 L5.9 -26.3 L7.4 -19.7 L8.7 -19.1 L14.5 -22.8 L22.8 -14.5 L19.1 -8.7 Z M9 0 A9 9 0 1 0 -9 0 A9 9 0 1 0 9 0 Z" fill="#BFBFBF" fill-rule="evenodd"/></g><g transform="translate(522.5,906) scale(1)"><circle cx="-18.5" cy="-12" r="7" fill="#BFBFBF" /><circle cx="19.5" cy="-12" r="7" fill="#BFBFBF" /><path d="M-33 11 V6 Q-33 -2 -18.5 -2 Q-4 -2 -4 6 V11 Z" fill="#BFBFBF" /><path d="M5 11 V6 Q5 -2 19.5 -2 Q34 -2 34 6 V11 Z" fill="#BFBFBF" /><circle cx="0.5" cy="-0.5" r="9.5" fill="#FFFFFF" /><path d="M-17 24 V17 Q-17 6 0.5 6 Q18 6 18 17 V24 Z" fill="#FFFFFF" /><circle cx="0.5" cy="-0.5" r="7" fill="#BFBFBF" /><path d="M-14 23 V17 Q-14 9 0.5 9 Q15 9 15 17 V23 Z" fill="#BFBFBF" /></g><text x="1217" y="308" font-size="59.5" fill="#000000" font-family='"Liberation Sans", sans-serif' font-weight="bold" text-anchor="middle" textLength="280" lengthAdjust="spacingAndGlyphs" >Soluciones</text><text x="878" y="407" font-size="24" fill="#111111" font-family='"Liberation Sans", sans-serif' font-weight="bold" text-anchor="middle" >Productos</text><text x="878" y="431" font-size="17" fill="#111111" font-family='"Liberation Sans", sans-serif' text-anchor="middle" opacity="0.8">Lorem ipsum</text><text x="878" y="453" font-size="17" fill="#111111" font-family='"Liberation Sans", sans-serif' text-anchor="middle" opacity="0.8">dolor sit amet,</text><text x="878" y="475" font-size="17" fill="#111111" font-family='"Liberation Sans", sans-serif' text-anchor="middle" opacity="0.8">consectetur</text><text x="878" y="497" font-size="17" fill="#111111" font-family='"Liberation Sans", sans-serif' text-anchor="middle" opacity="0.8">adipiscing elit,</text><text x="1548" y="413" font-size="24" fill="#111111" font-family='"Liberation Sans", sans-serif' font-weight="bold" text-anchor="middle" >Innovación</text><text x="1548" y="437" font-size="17" fill="#111111" font-family='"Liberation Sans", sans-serif' text-anchor="middle" opacity="0.8">Lorem ipsum</text><text x="1548" y="459" font-size="17" fill="#111111" font-family='"Liberation Sans", sans-serif' text-anchor="middle" opacity="0.8">dolor sit amet,</text><text x="1548" y="481" font-size="17" fill="#111111" font-family='"Liberation Sans", sans-serif' text-anchor="middle" opacity="0.8">consectetur</text><text x="1548" y="503" font-size="17" fill="#111111" font-family='"Liberation Sans", sans-serif' text-anchor="middle" opacity="0.8">adipiscing elit,</text><text x="886" y="770" font-size="24" fill="#111111" font-family='"Liberation Sans", sans-serif' font-weight="bold" text-anchor="middle" >Servicios</text><text x="886" y="794" font-size="17" fill="#111111" font-family='"Liberation Sans", sans-serif' text-anchor="middle" opacity="0.8">Lorem ipsum</text><text x="886" y="816" font-size="17" fill="#111111" font-family='"Liberation Sans", sans-serif' text-anchor="middle" opacity="0.8">dolor sit amet,</text><text x="886" y="838" font-size="17" fill="#111111" font-family='"Liberation Sans", sans-serif' text-anchor="middle" opacity="0.8">consectetur</text><text x="886" y="860" font-size="17" fill="#111111" font-family='"Liberation Sans", sans-serif' text-anchor="middle" opacity="0.8">adipiscing elit,</text><text x="1563" y="770" font-size="24" fill="#111111" font-family='"Liberation Sans", sans-serif' font-weight="bold" text-anchor="middle" >Soporte</text><text x="1563" y="794" font-size="17" fill="#111111" font-family='"Liberation Sans", sans-serif' text-anchor="middle" opacity="0.8">Lorem ipsum</text><text x="1563" y="816" font-size="17" fill="#111111" font-family='"Liberation Sans", sans-serif' text-anchor="middle" opacity="0.8">dolor sit amet,</text><text x="1563" y="838" font-size="17" fill="#111111" font-family='"Liberation Sans", sans-serif' text-anchor="middle" opacity="0.8">consectetur</text><text x="1563" y="860" font-size="17" fill="#111111" font-family='"Liberation Sans", sans-serif' text-anchor="middle" opacity="0.8">adipiscing elit,</text><path d="M1070 790 C1020 770 1060 735 1110 725" fill="none" stroke="#000000" stroke-width="11" /><path d="M1300 725 C1370 740 1390 780 1320 800" fill="none" stroke="#000000" stroke-width="11" /><path d="M1120 812 C1160 830 1250 830 1290 812" fill="none" stroke="#000000" stroke-width="9" /><path d="M1087 682 C1090 770 1140 815 1200 815 C1260 815 1310 770 1313 682 Z" fill="#000000" /><path d="M1300 700 C1355 685 1365 745 1300 775" fill="none" stroke="#000000" stroke-width="12" /><ellipse cx="1200" cy="682" rx="113" ry="30" fill="#000"/><ellipse cx="1200" cy="684" rx="92" ry="17" fill="#548235"/><path d="M1150 690 C1110 660 1190 640 1160 600 C1130 560 1190 530 1170 500" fill="none" stroke="#000000" stroke-width="10" /><path d="M1165 670 C1225 630 1240 590 1210 530 C1180 470 1240 440 1225 400" fill="none" stroke="#000000" stroke-width="12" /><path d="M1123.5 559.1 L1109.8 550.9 L1096.2 542.5 L1082.8 533.9 L1069.5 525.1 L1056.3 516.2 L1043.3 507.0 L1030.4 497.7 L1017.6 488.2 L1005.0 478.6 L992.5 468.7 L980.1 458.7 L967.8 448.5 L962.2 455.5 L974.9 465.3 L987.7 474.9 L1000.6 484.4 L1013.7 493.6 L1026.9 502.7 L1040.2 511.6 L1053.6 520.3 L1067.2 528.8 L1080.8 537.1 L1094.6 545.2 L1108.5 553.1 L1122.5 560.9 Z" fill="#000000" /><path d="M964.7 456.0 L976.0 455.8 L987.4 455.7 L998.7 455.5 L1010.0 455.4 L1010.0 454.6 L998.8 453.0 L987.6 451.3 L976.5 449.7 L965.3 448.0 Z" fill="#000000" /><path d="M961.5 453.9 L967.3 462.9 L973.1 472.0 L978.8 481.1 L984.6 490.2 L985.4 489.8 L981.2 479.9 L976.9 470.0 L972.7 460.1 L968.5 450.1 Z" fill="#000000" /><circle cx="965" cy="452" r="4.05" fill="#000000" /><path d="M1273.5 539.9 L1286.6 532.8 L1299.8 525.9 L1313.1 519.2 L1326.5 512.7 L1339.9 506.4 L1353.5 500.4 L1367.1 494.5 L1380.8 488.8 L1394.6 483.4 L1408.5 478.1 L1422.5 473.1 L1436.5 468.2 L1433.5 459.8 L1419.5 465.2 L1405.6 470.8 L1391.9 476.7 L1378.2 482.7 L1364.6 488.9 L1351.2 495.4 L1337.8 502.0 L1324.5 508.8 L1311.4 515.9 L1298.3 523.1 L1285.4 530.5 L1272.5 538.1 Z" fill="#000000" /><path d="M1434.9 460.0 L1423.7 461.2 L1412.5 462.3 L1401.2 463.5 L1390.0 464.6 L1390.0 465.4 L1401.3 466.0 L1412.5 466.7 L1423.8 467.3 L1435.1 468.0 Z" fill="#000000" /><path d="M1431.7 461.8 L1426.7 470.8 L1421.7 479.8 L1416.7 488.8 L1411.7 497.8 L1412.3 498.2 L1418.8 490.2 L1425.3 482.2 L1431.8 474.2 L1438.3 466.2 Z" fill="#000000" /><circle cx="1435" cy="464" r="4.05" fill="#000000" /><path d="M1077.5 715.1 L1068.1 720.3 L1058.9 725.6 L1049.7 731.1 L1040.6 736.7 L1031.6 742.4 L1022.7 748.3 L1013.8 754.3 L1005.1 760.5 L996.5 766.8 L987.9 773.3 L979.4 779.9 L971.1 786.6 L976.9 793.4 L984.8 786.3 L992.8 779.4 L1000.9 772.5 L1009.1 765.8 L1017.4 759.2 L1025.9 752.8 L1034.4 746.5 L1043.0 740.3 L1051.7 734.2 L1060.5 728.3 L1069.5 722.5 L1078.5 716.9 Z" fill="#000000" /><path d="M977.6 791.7 L981.3 781.8 L985.0 771.9 L988.7 762.1 L992.4 752.2 L991.6 751.8 L986.3 760.9 L981.0 770.1 L975.7 779.2 L970.4 788.3 Z" fill="#000000" /><path d="M974.2 794.0 L985.1 792.6 L996.1 791.2 L1007.1 789.8 L1018.0 788.4 L1018.0 787.6 L1006.9 787.2 L995.9 786.8 L984.9 786.4 L973.8 786.0 Z" fill="#000000" /><circle cx="974" cy="790" r="4.05" fill="#000000" /><path d="M1347.6 716.9 L1357.6 721.2 L1367.5 725.6 L1377.2 730.2 L1387.0 734.9 L1396.6 739.8 L1406.1 744.8 L1415.6 749.9 L1424.9 755.2 L1434.2 760.7 L1443.4 766.2 L1452.6 772.0 L1461.7 777.8 L1466.3 770.2 L1456.9 764.7 L1447.4 759.5 L1437.8 754.3 L1428.1 749.3 L1418.4 744.5 L1408.6 739.9 L1398.7 735.3 L1388.8 731.0 L1378.8 726.8 L1368.7 722.7 L1358.6 718.8 L1348.4 715.1 Z" fill="#000000" /><path d="M1464.4 770.0 L1453.3 769.9 L1442.2 769.8 L1431.1 769.7 L1420.0 769.6 L1420.0 770.4 L1430.9 772.3 L1441.8 774.2 L1452.7 776.1 L1463.6 778.0 Z" fill="#000000" /><path d="M1467.2 771.6 L1460.5 764.1 L1453.8 756.7 L1447.0 749.2 L1440.3 741.8 L1439.7 742.2 L1445.0 750.8 L1450.2 759.3 L1455.5 767.9 L1460.8 776.4 Z" fill="#000000" /><circle cx="1464" cy="774" r="4.05" fill="#000000" /></g>
<g id="s4"><rect x="445" y="206" width="1390" height="780" fill="#4472C4" /><rect x="445" y="206" width="153" height="780" fill="#FFFFFF" /><path d="M598 670 C598 685 566 701 556 712 A58 58 0 0 0 556 792 C566 803 598 818 598 843 Z" fill="#4472C4" /><circle cx="598" cy="752" r="47" fill="#FFFFFF" /><g transform="translate(522.5,277) scale(1)"><path d="M-9 17 L-14.5 10.7 A18 18 0 1 1 14.5 10.7 L9 17 Z" fill="none" stroke="#BFBFBF" stroke-width="4.5" stroke-linejoin="round"/><rect x="-10.5" y="26" width="21" height="3.8" fill="#BFBFBF" rx="1.9" /><rect x="-10.5" y="33.7" width="21" height="3.8" fill="#BFBFBF" rx="1.9" /><path d="M-6 41.5 H6 Q6 46 0 46 Q-6 46 -6 41.5 Z" fill="#BFBFBF" /></g><g transform="translate(522.5,442.5) scale(1)"><rect x="-28.5" y="-24.5" width="5" height="54" fill="#BFBFBF" /><rect x="-28.5" y="24.3" width="55.5" height="5" fill="#BFBFBF" /><path d="M-19.8 14.8 L-4.9 1.2 L0.5 7.5 L11.4 -2.8 L16 3.4 L22 -3" fill="none" stroke="#BFBFBF" stroke-width="5" stroke-linejoin="miter"/><path d="M12.5 -11 H26.3 V2.8 Z" fill="#BFBFBF" /></g><g transform="translate(522.5,597) scale(1)"><path d="M-22.5 -10 H16 V26.7 Q16 29.7 13 29.7 H-19.5 Q-22.5 29.7 -22.5 26.7 Z" fill="#BFBFBF" /><path d="M15 -1.5 A8.5 8.5 0 0 1 15 15.5" fill="none" stroke="#BFBFBF" stroke-width="5" /><path d="M-12.5 -15 C-9.0 -18 -9.0 -20 -12.5 -23 C-16.0 -26 -16.0 -28 -12.5 -31" fill="none" stroke="#BFBFBF" stroke-width="2.6" stroke-linecap="round"/><path d="M-3.5 -18 C0.0 -21 0.0 -23 -3.5 -26 C-7.0 -29 -7.0 -31 -3.5 -34" fill="none" stroke="#BFBFBF" stroke-width="2.6" stroke-linecap="round"/><path d="M4.5 -15 C8.0 -18 8.0 -20 4.5 -23 C1.0 -26 1.0 -28 4.5 -31" fill="none" stroke="#BFBFBF" stroke-width="2.6" stroke-linecap="round"/></g><g transform="translate(598,752) scale(1)"><path d="M19.7 -7.4 L26.3 -5.9 L26.3 5.9 L19.7 7.4 L19.1 8.7 L22.8 14.5 L14.5 22.8 L8.7 19.1 L7.4 19.7 L5.9 26.3 L-5.9 26.3 L-7.4 19.7 L-8.7 19.1 L-14.5 22.8 L-22.8 14.5 L-19.1 8.7 L-19.7 7.4 L-26.3 5.9 L-26.3 -5.9 L-19.7 -7.4 L-19.1 -8.7 L-22.8 -14.5 L-14.5 -22.8 L-8.7 -19.1 L-7.4 -19.7 L-5.9 -26.3 L5.9 -26.3 L7.4 -19.7 L8.7 -19.1 L14.5 -22.8 L22.8 -14.5 L19.1 -8.7 Z M9 0 A9 9 0 1 0 -9 0 A9 9 0 1 0 9 0 Z" fill="#595959" fill-rule="evenodd"/></g><g transform="translate(522.5,906) scale(1)"><circle cx="-18.5" cy="-12" r="7" fill="#BFBFBF" /><circle cx="19.5" cy="-12" r="7" fill="#BFBFBF" /><path d="M-33 11 V6 Q-33 -2 -18.5 -2 Q-4 -2 -4 6 V11 Z" fill="#BFBFBF" /><path d="M5 11 V6 Q5 -2 19.5 -2 Q34 -2 34 6 V11 Z" fill="#BFBFBF" /><circle cx="0.5" cy="-0.5" r="9.5" fill="#FFFFFF" /><path d="M-17 24 V17 Q-17 6 0.5 6 Q18 6 18 17 V24 Z" fill="#FFFFFF" /><circle cx="0.5" cy="-0.5" r="7" fill="#BFBFBF" /><path d="M-14 23 V17 Q-14 9 0.5 9 Q15 9 15 17 V23 Z" fill="#BFBFBF" /></g><text x="1216" y="308" font-size="59.5" fill="#FFFFFF" font-family='"Liberation Sans", sans-serif' font-weight="bold" text-anchor="middle" textLength="542" lengthAdjust="spacingAndGlyphs" >Modelo de Negocios</text><text x="891" y="400" font-size="49" fill="#FFFFFF" font-family='"Liberation Sans", sans-serif' font-weight="bold" text-anchor="middle" textLength="49.3" lengthAdjust="spacingAndGlyphs" >01</text><text x="891" y="430.5" font-size="27" fill="#FFFFFF" font-family='"Liberation Sans", sans-serif' font-weight="bold" text-anchor="middle" textLength="104" lengthAdjust="spacingAndGlyphs" >Tu Titulo</text><text x="891.5" y="453.2" font-size="18.5" fill="#FFFFFF" font-family='"Liberation Sans", sans-serif' text-anchor="middle" textLength="107.5" lengthAdjust="spacingAndGlyphs" >Lorem ipsum</text><text x="891.5" y="477.2" font-size="18.5" fill="#FFFFFF" font-family='"Liberation Sans", sans-serif' text-anchor="middle" textLength="119" lengthAdjust="spacingAndGlyphs" >dolor sit amet,</text><text x="891.5" y="501.2" font-size="18.5" fill="#FFFFFF" font-family='"Liberation Sans", sans-serif' text-anchor="middle" textLength="97.6" lengthAdjust="spacingAndGlyphs" >consectetur</text><text x="891.5" y="525.2" font-size="18.5" fill="#FFFFFF" font-family='"Liberation Sans", sans-serif' text-anchor="middle" textLength="116" lengthAdjust="spacingAndGlyphs" >adipiscing elit,</text><text x="1567" y="400" font-size="49" fill="#FFFFFF" font-family='"Liberation Sans", sans-serif' font-weight="bold" text-anchor="middle" textLength="49.3" lengthAdjust="spacingAndGlyphs" >02</text><text x="1567" y="430.5" font-size="27" fill="#FFFFFF" font-family='"Liberation Sans", sans-serif' font-weight="bold" text-anchor="middle" textLength="104" lengthAdjust="spacingAndGlyphs" >Tu Titulo</text><text x="1567.5" y="453.2" font-size="18.5" fill="#FFFFFF" font-family='"Liberation Sans", sans-serif' text-anchor="middle" textLength="107.5" lengthAdjust="spacingAndGlyphs" >Lorem ipsum</text><text x="1567.5" y="477.2" font-size="18.5" fill="#FFFFFF" font-family='"Liberation Sans", sans-serif' text-anchor="middle" textLength="119" lengthAdjust="spacingAndGlyphs" >dolor sit amet,</text><text x="1567.5" y="501.2" font-size="18.5" fill="#FFFFFF" font-family='"Liberation Sans", sans-serif' text-anchor="middle" textLength="97.6" lengthAdjust="spacingAndGlyphs" >consectetur</text><text x="1567.5" y="525.2" font-size="18.5" fill="#FFFFFF" font-family='"Liberation Sans", sans-serif' text-anchor="middle" textLength="116" lengthAdjust="spacingAndGlyphs" >adipiscing elit,</text><text x="891" y="774" font-size="49" fill="#FFFFFF" font-family='"Liberation Sans", sans-serif' font-weight="bold" text-anchor="middle" textLength="49.3" lengthAdjust="spacingAndGlyphs" >03</text><text x="891" y="804.5" font-size="27" fill="#FFFFFF" font-family='"Liberation Sans", sans-serif' font-weight="bold" text-anchor="middle" textLength="104" lengthAdjust="spacingAndGlyphs" >Tu Titulo</text><text x="891.5" y="827.2" font-size="18.5" fill="#FFFFFF" font-family='"Liberation Sans", sans-serif' text-anchor="middle" textLength="107.5" lengthAdjust="spacingAndGlyphs" >Lorem ipsum</text><text x="891.5" y="851.2" font-size="18.5" fill="#FFFFFF" font-family='"Liberation Sans", sans-serif' text-anchor="middle" textLength="119" lengthAdjust="spacingAndGlyphs" >dolor sit amet,</text><text x="891.5" y="875.2" font-size="18.5" fill="#FFFFFF" font-family='"Liberation Sans", sans-serif' text-anchor="middle" textLength="97.6" lengthAdjust="spacingAndGlyphs" >consectetur</text><text x="891.5" y="899.2" font-size="18.5" fill="#FFFFFF" font-family='"Liberation Sans", sans-serif' text-anchor="middle" textLength="116" lengthAdjust="spacingAndGlyphs" >adipiscing elit,</text><text x="1567" y="769" font-size="49" fill="#FFFFFF" font-family='"Liberation Sans", sans-serif' font-weight="bold" text-anchor="middle" textLength="49.3" lengthAdjust="spacingAndGlyphs" >04</text><text x="1567" y="799.5" font-size="27" fill="#FFFFFF" font-family='"Liberation Sans", sans-serif' font-weight="bold" text-anchor="middle" textLength="104" lengthAdjust="spacingAndGlyphs" >Tu Titulo</text><text x="1567.5" y="822.2" font-size="18.5" fill="#FFFFFF" font-family='"Liberation Sans", sans-serif' text-anchor="middle" textLength="107.5" lengthAdjust="spacingAndGlyphs" >Lorem ipsum</text><text x="1567.5" y="846.2" font-size="18.5" fill="#FFFFFF" font-family='"Liberation Sans", sans-serif' text-anchor="middle" textLength="119" lengthAdjust="spacingAndGlyphs" >dolor sit amet,</text><text x="1567.5" y="870.2" font-size="18.5" fill="#FFFFFF" font-family='"Liberation Sans", sans-serif' text-anchor="middle" textLength="97.6" lengthAdjust="spacingAndGlyphs" >consectetur</text><text x="1567.5" y="894.2" font-size="18.5" fill="#FFFFFF" font-family='"Liberation Sans", sans-serif' text-anchor="middle" textLength="116" lengthAdjust="spacingAndGlyphs" >adipiscing elit,</text><g transform="translate(1196,626) scale(3.1)"><path d="M19.7 -7.4 L26.3 -5.9 L26.3 5.9 L19.7 7.4 L19.1 8.7 L22.8 14.5 L14.5 22.8 L8.7 19.1 L7.4 19.7 L5.9 26.3 L-5.9 26.3 L-7.4 19.7 L-8.7 19.1 L-14.5 22.8 L-22.8 14.5 L-19.1 8.7 L-19.7 7.4 L-26.3 5.9 L-26.3 -5.9 L-19.7 -7.4 L-19.1 -8.7 L-22.8 -14.5 L-14.5 -22.8 L-8.7 -19.1 L-7.4 -19.7 L-5.9 -26.3 L5.9 -26.3 L7.4 -19.7 L8.7 -19.1 L14.5 -22.8 L22.8 -14.5 L19.1 -8.7 Z M10 0 A10 10 0 1 0 -10 0 A10 10 0 1 0 10 0 Z" fill="none" stroke="#FFFFFF" stroke-width="3.2" /></g><path d="M1088.6 564.0 A124 124 0 0 1 1303.4 564.0" fill="none" stroke="#FFFFFF" stroke-width="11" /><path d="M1318.1 604.5 A124 124 0 0 1 1163.9 745.8" fill="none" stroke="#FFFFFF" stroke-width="11" /><path d="M1124.9 727.6 A124 124 0 0 1 1079.5 583.6" fill="none" stroke="#FFFFFF" stroke-width="11" /><g transform="translate(1303.4,564.0) rotate(60)"><path d="M-22 -22 L0 0 L22 -22" fill="none" stroke="#FFFFFF" stroke-width="10" /></g><g transform="translate(1163.9,745.8) rotate(195)"><path d="M-22 -22 L0 0 L22 -22" fill="none" stroke="#FFFFFF" stroke-width="10" /></g><g transform="translate(1079.5,583.6) rotate(290)"><path d="M-22 -22 L0 0 L22 -22" fill="none" stroke="#FFFFFF" stroke-width="10" /></g><path d="M1065.7 513.7 L1056.5 508.8 L1047.6 503.8 L1038.8 498.5 L1030.2 493.0 L1021.8 487.4 L1013.5 481.4 L1005.4 475.3 L997.5 469.0 L989.7 462.4 L982.1 455.6 L974.7 448.6 L967.4 441.4 L960.6 448.6 L968.4 455.6 L976.4 462.3 L984.5 468.8 L992.8 475.0 L1001.2 481.0 L1009.8 486.8 L1018.5 492.3 L1027.4 497.6 L1036.4 502.6 L1045.6 507.4 L1054.9 512.0 L1064.3 516.3 Z" fill="#FFFFFF" /><path d="M964.2 449.5 L973.7 448.0 L983.1 446.4 L992.6 444.9 L1002.0 443.4 L1002.0 442.6 L992.4 442.1 L982.9 441.6 L973.3 441.0 L963.8 440.5 Z" fill="#FFFFFF" /><path d="M960.2 447.4 L966.3 455.1 L972.4 462.8 L978.5 470.5 L984.7 478.2 L985.3 477.8 L981.0 469.0 L976.6 460.2 L972.2 451.4 L967.8 442.6 Z" fill="#FFFFFF" /><circle cx="964" cy="445" r="4.5" fill="#FFFFFF" /><path d="M1322.8 516.3 L1332.1 510.6 L1341.4 505.3 L1350.8 500.2 L1360.4 495.3 L1370.0 490.7 L1379.8 486.4 L1389.6 482.3 L1399.6 478.5 L1409.6 475.0 L1419.8 471.7 L1430.0 468.6 L1440.4 465.8 L1437.6 456.2 L1427.2 459.6 L1416.9 463.3 L1406.7 467.2 L1396.7 471.4 L1386.8 475.8 L1377.0 480.5 L1367.4 485.4 L1357.9 490.6 L1348.5 496.0 L1339.3 501.7 L1330.2 507.6 L1321.2 513.7 Z" fill="#FFFFFF" /><path d="M1439.3 456.5 L1429.0 456.8 L1418.7 457.1 L1408.4 457.3 L1398.0 457.6 L1398.0 458.4 L1408.1 460.2 L1418.3 461.9 L1428.5 463.7 L1438.7 465.5 Z" fill="#FFFFFF" /><path d="M1435.3 458.5 L1430.9 466.8 L1426.5 475.1 L1422.1 483.5 L1417.7 491.8 L1418.3 492.2 L1424.4 485.0 L1430.5 477.9 L1436.6 470.7 L1442.7 463.5 Z" fill="#FFFFFF" /><circle cx="1439" cy="461" r="4.5" fill="#FFFFFF" /><path d="M1077.3 714.7 L1067.7 719.6 L1058.3 724.7 L1049.0 730.0 L1039.8 735.5 L1030.7 741.2 L1021.8 747.1 L1013.0 753.2 L1004.3 759.4 L995.7 765.9 L987.2 772.5 L978.8 779.3 L970.7 786.3 L977.3 793.7 L985.1 786.4 L992.9 779.2 L1000.9 772.3 L1009.0 765.5 L1017.2 758.8 L1025.6 752.4 L1034.1 746.1 L1042.7 740.0 L1051.5 734.1 L1060.4 728.3 L1069.5 722.7 L1078.7 717.3 Z" fill="#FFFFFF" /><path d="M978.1 791.7 L981.2 781.8 L984.3 772.0 L987.3 762.1 L990.4 752.2 L989.6 751.8 L984.7 760.9 L979.7 770.0 L974.8 779.2 L969.9 788.3 Z" fill="#FFFFFF" /><path d="M974.0 794.5 L984.2 793.5 L994.5 792.5 L1004.8 791.4 L1015.0 790.4 L1015.0 789.6 L1004.8 788.6 L994.5 787.5 L984.2 786.5 L974.0 785.5 Z" fill="#FFFFFF" /><circle cx="974" cy="790" r="4.5" fill="#FFFFFF" /><path d="M1305.5 738.4 L1318.1 743.1 L1330.5 747.9 L1342.9 753.0 L1355.1 758.2 L1367.3 763.7 L1379.3 769.3 L1391.3 775.2 L1403.1 781.2 L1414.9 787.4 L1426.5 793.9 L1438.0 800.5 L1449.5 807.3 L1454.5 798.7 L1442.6 792.3 L1430.7 786.1 L1418.6 780.1 L1406.5 774.3 L1394.3 768.8 L1382.0 763.4 L1369.6 758.2 L1357.1 753.3 L1344.6 748.6 L1332.0 744.0 L1319.3 739.7 L1306.5 735.6 Z" fill="#FFFFFF" /><path d="M1452.3 798.5 L1441.2 798.8 L1430.2 799.1 L1419.1 799.3 L1408.0 799.6 L1408.0 800.4 L1418.9 802.2 L1429.8 803.9 L1440.8 805.7 L1451.7 807.5 Z" fill="#FFFFFF" /><path d="M1455.7 800.5 L1448.9 792.3 L1442.0 784.1 L1435.2 775.9 L1428.3 767.8 L1427.7 768.2 L1432.8 777.6 L1438.0 786.9 L1443.1 796.2 L1448.3 805.5 Z" fill="#FFFFFF" /><circle cx="1452" cy="803" r="4.5" fill="#FFFFFF" /></g>
<g id="s5"><rect x="445" y="206" width="1390" height="780" fill="#203864" /><rect x="445" y="206" width="153" height="780" fill="#FFFFFF" /><path d="M598 824 C598 839 566 855 556 866 A58 58 0 0 0 556 946 C566 957 598 972 598 997 Z" fill="#203864" /><circle cx="598" cy="906" r="47" fill="#FFFFFF" /><g transform="translate(522.5,277) scale(1)"><path d="M-9 17 L-14.5 10.7 A18 18 0 1 1 14.5 10.7 L9 17 Z" fill="none" stroke="#BFBFBF" stroke-width="4.5" stroke-linejoin="round"/><rect x="-10.5" y="26" width="21" height="3.8" fill="#BFBFBF" rx="1.9" /><rect x="-10.5" y="33.7" width="21" height="3.8" fill="#BFBFBF" rx="1.9" /><path d="M-6 41.5 H6 Q6 46 0 46 Q-6 46 -6 41.5 Z" fill="#BFBFBF" /></g><g transform="translate(522.5,442.5) scale(1)"><rect x="-28.5" y="-24.5" width="5" height="54" fill="#BFBFBF" /><rect x="-28.5" y="24.3" width="55.5" height="5" fill="#BFBFBF" /><path d="M-19.8 14.8 L-4.9 1.2 L0.5 7.5 L11.4 -2.8 L16 3.4 L22 -3" fill="none" stroke="#BFBFBF" stroke-width="5" stroke-linejoin="miter"/><path d="M12.5 -11 H26.3 V2.8 Z" fill="#BFBFBF" /></g><g transform="translate(522.5,597) scale(1)"><path d="M-22.5 -10 H16 V26.7 Q16 29.7 13 29.7 H-19.5 Q-22.5 29.7 -22.5 26.7 Z" fill="#BFBFBF" /><path d="M15 -1.5 A8.5 8.5 0 0 1 15 15.5" fill="none" stroke="#BFBFBF" stroke-width="5" /><path d="M-12.5 -15 C-9.0 -18 -9.0 -20 -12.5 -23 C-16.0 -26 -16.0 -28 -12.5 -31" fill="none" stroke="#BFBFBF" stroke-width="2.6" stroke-linecap="round"/><path d="M-3.5 -18 C0.0 -21 0.0 -23 -3.5 -26 C-7.0 -29 -7.0 -31 -3.5 -34" fill="none" stroke="#BFBFBF" stroke-width="2.6" stroke-linecap="round"/><path d="M4.5 -15 C8.0 -18 8.0 -20 4.5 -23 C1.0 -26 1.0 -28 4.5 -31" fill="none" stroke="#BFBFBF" stroke-width="2.6" stroke-linecap="round"/></g><g transform="translate(522.5,752) scale(1)"><path d="M19.7 -7.4 L26.3 -5.9 L26.3 5.9 L19.7 7.4 L19.1 8.7 L22.8 14.5 L14.5 22.8 L8.7 19.1 L7.4 19.7 L5.9 26.3 L-5.9 26.3 L-7.4 19.7 L-8.7 19.1 L-14.5 22.8 L-22.8 14.5 L-19.1 8.7 L-19.7 7.4 L-26.3 5.9 L-26.3 -5.9 L-19.7 -7.4 L-19.1 -8.7 L-22.8 -14.5 L-14.5 -22.8 L-8.7 -19.1 L-7.4 -19.7 L-5.9 -26.3 L5.9 -26.3 L7.4 -19.7 L8.7 -19.1 L14.5 -22.8 L22.8 -14.5 L19.1 -8.7 Z M9 0 A9 9 0 1 0 -9 0 A9 9 0 1 0 9 0 Z" fill="#BFBFBF" fill-rule="evenodd"/></g><g transform="translate(598,906) scale(1)"><circle cx="-18.5" cy="-12" r="7" fill="#595959" /><circle cx="19.5" cy="-12" r="7" fill="#595959" /><path d="M-33 11 V6 Q-33 -2 -18.5 -2 Q-4 -2 -4 6 V11 Z" fill="#595959" /><path d="M5 11 V6 Q5 -2 19.5 -2 Q34 -2 34 6 V11 Z" fill="#595959" /><circle cx="0.5" cy="-0.5" r="9.5" fill="#FFFFFF" /><path d="M-17 24 V17 Q-17 6 0.5 6 Q18 6 18 17 V24 Z" fill="#FFFFFF" /><circle cx="0.5" cy="-0.5" r="7" fill="#595959" /><path d="M-14 23 V17 Q-14 9 0.5 9 Q15 9 15 17 V23 Z" fill="#595959" /></g><text x="1217" y="308" font-size="59.5" fill="#FFFFFF" font-family='"Liberation Sans", sans-serif' font-weight="bold" text-anchor="middle" textLength="273" lengthAdjust="spacingAndGlyphs" >Miembros</text><g transform="translate(1133,419) scale(0.96,1.1294117647058823)"><ellipse cx="0" cy="30" rx="21" ry="29" fill="#FFFFFF"/><path d="M-50 70 Q0 56 50 70 L62 205 L48 208 L40 120 L38 195 L30 338 L10 340 L2 215 L-2 215 L-14 335 L-32 332 L-38 195 L-40 120 L-48 208 L-62 205 Z" fill="#FFFFFF" /><rect x="42" y="200" width="32" height="58" fill="#FFFFFF" rx="4" /></g><g transform="translate(1248,440) scale(0.8925,1.05)"><ellipse cx="0" cy="28" rx="20" ry="27" fill="#FFFFFF"/><path d="M-45 68 Q0 56 45 68 L70 132 L42 176 L30 168 L52 132 L36 104 L30 150 L40 205 L24 335 L8 338 L4 222 L-4 222 L-8 338 L-24 335 L-40 205 L-30 150 L-36 104 L-52 132 L-30 168 L-42 176 L-70 132 Z" fill="#FFFFFF" /></g><g transform="translate(878,332) scale(0.42,0.49411764705882355)"><ellipse cx="0" cy="30" rx="21" ry="29" fill="#FFFFFF"/><path d="M-50 70 Q0 56 50 70 L62 205 L48 208 L40 120 L38 195 L30 338 L10 340 L2 215 L-2 215 L-14 335 L-32 332 L-38 195 L-40 120 L-48 208 L-62 205 Z" fill="#FFFFFF" /><rect x="42" y="200" width="32" height="58" fill="#FFFFFF" rx="4" /></g><text x="878" y="530" font-size="24" fill="#FFFFFF" font-family='"Liberation Sans", sans-serif' font-weight="bold" text-anchor="middle" >Miembro 1</text><text x="878" y="554" font-size="17" fill="#FFFFFF" font-family='"Liberation Sans", sans-serif' text-anchor="middle" opacity="0.8">Lorem ipsum</text><text x="878" y="576" font-size="17" fill="#FFFFFF" font-family='"Liberation Sans", sans-serif' text-anchor="middle" opacity="0.8">dolor sit amet,</text><text x="878" y="598" font-size="17" fill="#FFFFFF" font-family='"Liberation Sans", sans-serif' text-anchor="middle" opacity="0.8">consectetur</text><text x="878" y="620" font-size="17" fill="#FFFFFF" font-family='"Liberation Sans", sans-serif' text-anchor="middle" opacity="0.8">adipiscing elit,</text><g transform="translate(1559,346) scale(0.34,0.4)"><ellipse cx="0" cy="28" rx="20" ry="27" fill="#FFFFFF"/><path d="M-45 68 Q0 56 45 68 L70 132 L42 176 L30 168 L52 132 L36 104 L30 150 L40 205 L24 335 L8 338 L4 222 L-4 222 L-8 338 L-24 335 L-40 205 L-30 150 L-36 104 L-52 132 L-30 168 L-42 176 L-70 132 Z" fill="#FFFFFF" /></g><text x="1559" y="502" font-size="24" fill="#FFFFFF" font-family='"Liberation Sans", sans-serif' font-weight="bold" text-anchor="middle" >Miembro 2</text><text x="1559" y="526" font-size="17" fill="#FFFFFF" font-family='"Liberation Sans", sans-serif' text-anchor="middle" opacity="0.8">Lorem ipsum</text><text x="1559" y="548" font-size="17" fill="#FFFFFF" font-family='"Liberation Sans", sans-serif' text-anchor="middle" opacity="0.8">dolor sit amet,</text><text x="1559" y="570" font-size="17" fill="#FFFFFF" font-family='"Liberation Sans", sans-serif' text-anchor="middle" opacity="0.8">consectetur</text><text x="1559" y="592" font-size="17" fill="#FFFFFF" font-family='"Liberation Sans", sans-serif' text-anchor="middle" opacity="0.8">adipiscing elit,</text><g transform="translate(885,692) scale(0.33,0.38823529411764707)"><ellipse cx="0" cy="28" rx="20" ry="27" fill="#FFFFFF"/><path d="M-45 68 Q0 56 45 68 L70 132 L42 176 L30 168 L52 132 L36 104 L30 150 L40 205 L24 335 L8 338 L4 222 L-4 222 L-8 338 L-24 335 L-40 205 L-30 150 L-36 104 L-52 132 L-30 168 L-42 176 L-70 132 Z" fill="#FFFFFF" /></g><text x="885" y="848" font-size="24" fill="#FFFFFF" font-family='"Liberation Sans", sans-serif' font-weight="bold" text-anchor="middle" >Miembro 3</text><text x="885" y="872" font-size="17" fill="#FFFFFF" font-family='"Liberation Sans", sans-serif' text-anchor="middle" opacity="0.8">Lorem ipsum</text><text x="885" y="894" font-size="17" fill="#FFFFFF" font-family='"Liberation Sans", sans-serif' text-anchor="middle" opacity="0.8">dolor sit amet,</text><text x="885" y="916" font-size="17" fill="#FFFFFF" font-family='"Liberation Sans", sans-serif' text-anchor="middle" opacity="0.8">consectetur</text><text x="885" y="938" font-size="17" fill="#FFFFFF" font-family='"Liberation Sans", sans-serif' text-anchor="middle" opacity="0.8">adipiscing elit,</text><g transform="translate(1566,671) scale(0.3925,0.46176470588235297)"><ellipse cx="0" cy="30" rx="21" ry="29" fill="#FFFFFF"/><path d="M-50 70 Q0 56 50 70 L62 205 L48 208 L40 120 L38 195 L30 338 L10 340 L2 215 L-2 215 L-14 335 L-32 332 L-38 195 L-40 120 L-48 208 L-62 205 Z" fill="#FFFFFF" /><rect x="42" y="200" width="32" height="58" fill="#FFFFFF" rx="4" /></g><text x="1566" y="860" font-size="24" fill="#FFFFFF" font-family='"Liberation Sans", sans-serif' font-weight="bold" text-anchor="middle" >Miembro 4</text><text x="1566" y="884" font-size="17" fill="#FFFFFF" font-family='"Liberation Sans", sans-serif' text-anchor="middle" opacity="0.8">Lorem ipsum</text><text x="1566" y="906" font-size="17" fill="#FFFFFF" font-family='"Liberation Sans", sans-serif' text-anchor="middle" opacity="0.8">dolor sit amet,</text><text x="1566" y="928" font-size="17" fill="#FFFFFF" font-family='"Liberation Sans", sans-serif' text-anchor="middle" opacity="0.8">consectetur</text><text x="1566" y="950" font-size="17" fill="#FFFFFF" font-family='"Liberation Sans", sans-serif' text-anchor="middle" opacity="0.8">adipiscing elit,</text><path d="M1065.7 513.7 L1056.5 508.8 L1047.6 503.8 L1038.8 498.5 L1030.2 493.0 L1021.8 487.4 L1013.5 481.4 L1005.4 475.3 L997.5 469.0 L989.7 462.4 L982.1 455.6 L974.7 448.6 L967.4 441.4 L960.6 448.6 L968.4 455.6 L976.4 462.3 L984.5 468.8 L992.8 475.0 L1001.2 481.0 L1009.8 486.8 L1018.5 492.3 L1027.4 497.6 L1036.4 502.6 L1045.6 507.4 L1054.9 512.0 L1064.3 516.3 Z" fill="#FFFFFF" /><path d="M964.2 449.5 L973.7 448.0 L983.1 446.4 L992.6 444.9 L1002.0 443.4 L1002.0 442.6 L992.4 442.1 L982.9 441.6 L973.3 441.0 L963.8 440.5 Z" fill="#FFFFFF" /><path d="M960.2 447.4 L966.3 455.1 L972.4 462.8 L978.5 470.5 L984.7 478.2 L985.3 477.8 L981.0 469.0 L976.6 460.2 L972.2 451.4 L967.8 442.6 Z" fill="#FFFFFF" /><circle cx="964" cy="445" r="4.5" fill="#FFFFFF" /><path d="M1322.8 516.3 L1332.1 510.6 L1341.4 505.3 L1350.8 500.2 L1360.4 495.3 L1370.0 490.7 L1379.8 486.4 L1389.6 482.3 L1399.6 478.5 L1409.6 475.0 L1419.8 471.7 L1430.0 468.6 L1440.4 465.8 L1437.6 456.2 L1427.2 459.6 L1416.9 463.3 L1406.7 467.2 L1396.7 471.4 L1386.8 475.8 L1377.0 480.5 L1367.4 485.4 L1357.9 490.6 L1348.5 496.0 L1339.3 501.7 L1330.2 507.6 L1321.2 513.7 Z" fill="#FFFFFF" /><path d="M1439.3 456.5 L1429.0 456.8 L1418.7 457.1 L1408.4 457.3 L1398.0 457.6 L1398.0 458.4 L1408.1 460.2 L1418.3 461.9 L1428.5 463.7 L1438.7 465.5 Z" fill="#FFFFFF" /><path d="M1435.3 458.5 L1430.9 466.8 L1426.5 475.1 L1422.1 483.5 L1417.7 491.8 L1418.3 492.2 L1424.4 485.0 L1430.5 477.9 L1436.6 470.7 L1442.7 463.5 Z" fill="#FFFFFF" /><circle cx="1439" cy="461" r="4.5" fill="#FFFFFF" /><path d="M1077.3 714.7 L1067.7 719.6 L1058.3 724.7 L1049.0 730.0 L1039.8 735.5 L1030.7 741.2 L1021.8 747.1 L1013.0 753.2 L1004.3 759.4 L995.7 765.9 L987.2 772.5 L978.8 779.3 L970.7 786.3 L977.3 793.7 L985.1 786.4 L992.9 779.2 L1000.9 772.3 L1009.0 765.5 L1017.2 758.8 L1025.6 752.4 L1034.1 746.1 L1042.7 740.0 L1051.5 734.1 L1060.4 728.3 L1069.5 722.7 L1078.7 717.3 Z" fill="#FFFFFF" /><path d="M978.1 791.7 L981.2 781.8 L984.3 772.0 L987.3 762.1 L990.4 752.2 L989.6 751.8 L984.7 760.9 L979.7 770.0 L974.8 779.2 L969.9 788.3 Z" fill="#FFFFFF" /><path d="M974.0 794.5 L984.2 793.5 L994.5 792.5 L1004.8 791.4 L1015.0 790.4 L1015.0 789.6 L1004.8 788.6 L994.5 787.5 L984.2 786.5 L974.0 785.5 Z" fill="#FFFFFF" /><circle cx="974" cy="790" r="4.5" fill="#FFFFFF" /><path d="M1305.5 738.4 L1318.1 743.1 L1330.5 747.9 L1342.9 753.0 L1355.1 758.2 L1367.3 763.7 L1379.3 769.3 L1391.3 775.2 L1403.1 781.2 L1414.9 787.4 L1426.5 793.9 L1438.0 800.5 L1449.5 807.3 L1454.5 798.7 L1442.6 792.3 L1430.7 786.1 L1418.6 780.1 L1406.5 774.3 L1394.3 768.8 L1382.0 763.4 L1369.6 758.2 L1357.1 753.3 L1344.6 748.6 L1332.0 744.0 L1319.3 739.7 L1306.5 735.6 Z" fill="#FFFFFF" /><path d="M1452.3 798.5 L1441.2 798.8 L1430.2 799.1 L1419.1 799.3 L1408.0 799.6 L1408.0 800.4 L1418.9 802.2 L1429.8 803.9 L1440.8 805.7 L1451.7 807.5 Z" fill="#FFFFFF" /><path d="M1455.7 800.5 L1448.9 792.3 L1442.0 784.1 L1435.2 775.9 L1428.3 767.8 L1427.7 768.2 L1432.8 777.6 L1438.0 786.9 L1443.1 796.2 L1448.3 805.5 Z" fill="#FFFFFF" /><circle cx="1452" cy="803" r="4.5" fill="#FFFFFF" /></g>
</defs><rect x="0" y="0" width="1920" height="1033" fill="#E6E6E6" /><rect x="0" y="0" width="1920" height="34" fill="#B7472A" /><rect x="0" y="34" width="1920" height="126" fill="#F3F2F1" /><rect x="0" y="160" width="1920" height="6" fill="url(#shd)"/><path d="M21.5 10.5 H36.5 V25.5 H23.5 L21.5 23.5 Z" fill="none" stroke="#FFFFFF" stroke-width="1.2" /><path d="M24.5 10.5 V16.5 H33.5 V10.5" fill="none" stroke="#FFFFFF" stroke-width="1.2" /><path d="M25.5 25.5 V20.5 H32.5 V25.5" fill="none" stroke="#FFFFFF" stroke-width="1.2" /><path d="M51.5 10.5 V16.5 H57.5" fill="none" stroke="#E8826A" stroke-width="1.1" /><path d="M51.8 16.2 C55 12 60 10.5 63 12.5 C66 15 65 19 62 22 L56.5 26" fill="none" stroke="#E8826A" stroke-width="1.1" /><path d="M72.0 15.0 L74.5 17.0 L77.0 15.0" fill="none" stroke="#E8826A" stroke-width="1" /><path d="M89.5 10.5 H95.5 V16.5" fill="none" stroke="#E8826A" stroke-width="1.1" /><path d="M91 11.5 A8 8 0 1 0 101.5 11.5" fill="none" stroke="#E8826A" stroke-width="1.1" /><path d="M118 10.5 H133 M119.5 10.5 V18.5 H131.5 V10.5 M125.5 18.5 V24.5 M121.5 24.5 H129.5" fill="none" stroke="#FFFFFF" stroke-width="1.1" /><path d="M124 12.5 L128 14.5 L124 16.5 Z" fill="none" stroke="#FFFFFF" stroke-width="1" /><path d="M151 14.5 H158 M151.5 17 L154.5 19.5 L157.5 17" fill="none" stroke="#FFFFFF" stroke-width="1.1" /><text x="380" y="20" font-size="12.5" fill="#FFFFFF" font-family='"Liberation Sans", sans-serif' textLength="191" lengthAdjust="spacingAndGlyphs" >App PowerPoint.pptx  -  PowerPoint</text><rect x="784" y="5" width="368" height="24" fill="#FCC9B6" /><path d="M806 23 L810 19" fill="none" stroke="#7A2410" stroke-width="1.2" /><circle cx="813" cy="16" r="4.3" fill="none" stroke="#7A2410" stroke-width="1.2" /><text x="834.6" y="21" font-size="12.5" fill="#7A2410" font-family='"Liberation Sans", sans-serif' textLength="77" lengthAdjust="spacingAndGlyphs" >Buscar (Alt+Q)</text><rect x="1660" y="7" width="66" height="19" fill="#FFFFFF" rx="2" /><text x="1671.4" y="21" font-size="12.5" fill="#B7472A" font-family='"Liberation Sans", sans-serif' textLength="43.3" lengthAdjust="spacingAndGlyphs" >Inic. ses.</text><rect x="1752.5" y="11.5" width="12" height="9.5" fill="none" stroke="#FFFFFF" stroke-width="1" /><path d="M1752.5 13.5 H1764.5 M1758.5 20.5 V15 M1756.5 17 L1758.5 15 L1760.5 17" fill="none" stroke="#FFFFFF" stroke-width="1" /><line x1="1800" y1="15.5" x2="1810" y2="15.5" stroke="#FFFFFF" stroke-width="1" /><rect x="1845.5" y="13.5" width="8" height="8" fill="none" stroke="#FFFFFF" stroke-width="1" rx="1" /><path d="M1847.5 13.5 V12 Q1847.5 11 1848.5 11 H1855 Q1856 11 1856 12 V18.5 Q1856 19.5 1855 19.5 H1853.5" fill="none" stroke="#FFFFFF" stroke-width="1" /><path d="M1892 11 L1902 21 M1902 11 L1892 21" fill="none" stroke="#FFFFFF" stroke-width="1.1" /><text x="14" y="54.3" font-size="13.5" fill="#3B3A39" font-family='"Liberation Sans", sans-serif' textLength="42" lengthAdjust="spacingAndGlyphs" >Archivo</text><text x="86" y="54.3" font-size="13.5" fill="#262626" font-family='"Liberation Sans", sans-serif' textLength="32" lengthAdjust="spacingAndGlyphs" >Inicio</text><text x="146" y="54.3" font-size="13.5" fill="#3B3A39" font-family='"Liberation Sans", sans-serif' textLength="44" lengthAdjust="spacingAndGlyphs" >Insertar</text><text x="219" y="54.3" font-size="13.5" fill="#3B3A39" font-family='"Liberation Sans", sans-serif' textLength="39" lengthAdjust="spacingAndGlyphs" >Diseño</text><text x="288" y="54.3" font-size="13.5" fill="#3B3A39" font-family='"Liberation Sans", sans-serif' textLength="71" lengthAdjust="spacingAndGlyphs" >Transiciones</text><text x="389" y="54.3" font-size="13.5" fill="#3B3A39" font-family='"Liberation Sans", sans-serif' textLength="72" lengthAdjust="spacingAndGlyphs" >Animaciones</text><text x="494" y="54.3" font-size="13.5" fill="#3B3A39" font-family='"Liberation Sans", sans-serif' textLength="172" lengthAdjust="spacingAndGlyphs" >Presentación con diapositivas</text><text x="697.3" y="54.3" font-size="13.5" fill="#3B3A39" font-family='"Liberation Sans", sans-serif' textLength="40.4" lengthAdjust="spacingAndGlyphs" >Grabar</text><text x="765" y="54.3" font-size="13.5" fill="#3B3A39" font-family='"Liberation Sans", sans-serif' textLength="41.7" lengthAdjust="spacingAndGlyphs" >Revisar</text><text x="835" y="54.3" font-size="13.5" fill="#3B3A39" font-family='"Liberation Sans", sans-serif' textLength="27.7" lengthAdjust="spacingAndGlyphs" >Vista</text><text x="891.7" y="54.3" font-size="13.5" fill="#3B3A39" font-family='"Liberation Sans", sans-serif' textLength="36" lengthAdjust="spacingAndGlyphs" >Ayuda</text><text x="961" y="54.3" font-size="13.5" fill="#3B3A39" font-family='"Liberation Sans", sans-serif' textLength="130.7" lengthAdjust="spacingAndGlyphs" >ABBYY FineReader PDF</text><text x="1125" y="54.3" font-size="13.5" fill="#3B3A39" font-family='"Liberation Sans", sans-serif' textLength="45.7" lengthAdjust="spacingAndGlyphs" >Acrobat</text><rect x="86" y="59" width="32" height="3" fill="#B7472A" /><rect x="1813.5" y="37.5" width="93.5" height="22.5" fill="#FFFFFF" stroke="#E1DFDD" stroke-width="1" rx="2" /><path d="M1822 48 V55 H1831.5 V51" fill="none" stroke="#B7472A" stroke-width="1.1" /><path d="M1825 52 C1825 47 1828 45.5 1831 45.5 L1829.5 43.5 M1831 45.5 L1829 48" fill="none" stroke="#B7472A" stroke-width="1.1" /><text x="1837" y="54" font-size="13.5" fill="#B7472A" font-family='"Liberation Sans", sans-serif' textLength="61" lengthAdjust="spacingAndGlyphs" stroke="#B7472A" stroke-width="0.45">Compartir</text><path d="M19 77 H24 M33 77 H38 V84 M19 77 V100 H31" fill="none" stroke="#E08A1E" stroke-width="1.6" fill="#FBE6B8"/><rect x="19.5" y="77.5" width="18" height="22" fill="#FCEFD0" stroke="#E8900F" stroke-width="1.5" /><path d="M22.5 80 V75.5 H26 Q28 71 30.5 71 Q33 71 35 75.5 H38.5 V80 Z" fill="#FFFFFF" stroke="#444" stroke-width="1" /><rect x="31.5" y="84.5" width="13" height="18" fill="#FFFFFF" stroke="#262626" stroke-width="1.2" /><text x="14" y="117" font-size="12" fill="#262626" font-family='"Liberation Sans", sans-serif' textLength="30" lengthAdjust="spacingAndGlyphs" >Pegar</text><path d="M25.7 126.9 L28.5 129.1 L31.3 126.9" fill="none" stroke="#262626" stroke-width="1" /><path d="M58 72 L63 84 M64 72 L59 84" fill="none" stroke="#A6A6A6" stroke-width="1" /><circle cx="58.5" cy="85" r="2" fill="none" stroke="#A6A6A6" stroke-width="1" /><circle cx="64" cy="85" r="2" fill="none" stroke="#A6A6A6" stroke-width="1" /><text x="72" y="84" font-size="12" fill="#A6A6A6" font-family='"Liberation Sans", sans-serif' textLength="33" lengthAdjust="spacingAndGlyphs" >Cortar</text><path d="M55.5 99 V95.5 H59.5 V95.5 M55.5 95.5 V109 H59" fill="none" stroke="#A6A6A6" stroke-width="1" /><path d="M56.5 96 H60.5 M61 95.5 V110.5 H69 V101 L66 97 H61" fill="none" stroke="#A6A6A6" stroke-width="1" /><path d="M63 104 H67 M63 106.5 H67" fill="none" stroke="#A6A6A6" stroke-width="0.8" /><text x="72" y="108" font-size="12" fill="#A6A6A6" font-family='"Liberation Sans", sans-serif' textLength="35" lengthAdjust="spacingAndGlyphs" >Copiar</text><path d="M117.5 103.5 L120 105.5 L122.5 103.5" fill="none" stroke="#A6A6A6" stroke-width="1" /><path d="M56 128 L61 123 L66 128 L61 133 Z M62 123 L67 118 M64 125 L69 120" fill="none" stroke="#A6A6A6" stroke-width="1.2" /><text x="72" y="132" font-size="12" fill="#A6A6A6" font-family='"Liberation Sans", sans-serif' textLength="81" lengthAdjust="spacingAndGlyphs" >Copiar formato</text><text x="42" y="155.5" font-size="11.5" fill="#3B3A39" font-family='"Liberation Sans", sans-serif' textLength="67" lengthAdjust="spacingAndGlyphs" >Portapapeles</text><path d="M157 148.5 H164 V155.5 M159 150.5 L163.5 155 M163.5 152 V155 H160.5" fill="none" stroke="#8A8886" stroke-width="0.9" /><line x1="167.5" y1="68" x2="167.5" y2="156" stroke="#C8C6C4" stroke-width="1" /><rect x="198" y="78" width="27.5" height="18.5" fill="none" stroke="#262626" stroke-width="1.2" /><rect x="200.5" y="80.5" width="22.5" height="14" fill="#FFFFFF" stroke="#555" stroke-width="0.8" /><path d="M200.5 84 H223 M211.5 84 V94.5" fill="none" stroke="#555" stroke-width="0.8" /><path d="M203.5 70 V85 M196 77.5 H211" fill="none" stroke="#21A366" stroke-width="1.6" /><text x="195.4" y="116.7" font-size="12" fill="#262626" font-family='"Liberation Sans", sans-serif' textLength="33.3" lengthAdjust="spacingAndGlyphs" >Nueva</text><text x="178.5" y="132.8" font-size="12" fill="#262626" font-family='"Liberation Sans", sans-serif' textLength="56" lengthAdjust="spacingAndGlyphs" >diapositiva</text><path d="M238.7 127.4 L241.5 129.6 L244.3 127.4" fill="none" stroke="#262626" stroke-width="1" /><rect x="252.5" y="72.5" width="15" height="12" fill="none" stroke="#262626" stroke-width="1" /><path d="M254.5 74.5 H265.5 V82.5 H254.5 Z M254.5 76.5 H265.5 M260 76.5 V82.5" fill="none" stroke="#444" stroke-width="0.7" /><text x="271.5" y="83.9" font-size="12" fill="#262626" font-family='"Liberation Sans", sans-serif' textLength="35.4" lengthAdjust="spacingAndGlyphs" >Diseño</text><path d="M310.5 78.5 L313 80.5 L315.5 78.5" fill="none" stroke="#262626" stroke-width="1" /><rect x="252.5" y="96.5" width="15" height="12" fill="none" stroke="#262626" stroke-width="1" /><path d="M254.5 98.5 H265.5 V106.5 H254.5 Z" fill="none" stroke="#444" stroke-width="0.7" /><path d="M258 101 C258 97 255 95.5 253 97 M253 95 V98 H256" fill="none" stroke="#2B88D8" stroke-width="1.1" /><text x="271.5" y="107.8" font-size="12" fill="#262626" font-family='"Liberation Sans", sans-serif' textLength="59.5" lengthAdjust="spacingAndGlyphs" >Restablecer</text><path d="M252.5 119 H267 M252.5 120.5 H267" fill="none" stroke="#21A366" stroke-width="1" /><rect x="252.5" y="123.5" width="14.5" height="10" fill="none" stroke="#262626" stroke-width="1" /><rect x="254.5" y="125.5" width="10.5" height="6" fill="none" stroke="#555" stroke-width="0.7" /><text x="271" y="131.6" font-size="12" fill="#262626" font-family='"Liberation Sans", sans-serif' textLength="41" lengthAdjust="spacingAndGlyphs" >Sección</text><path d="M316.0 127.0 L318.5 129.0 L321.0 127.0" fill="none" stroke="#262626" stroke-width="1" /><text x="225.6" y="155.5" font-size="11.5" fill="#3B3A39" font-family='"Liberation Sans", sans-serif' textLength="61" lengthAdjust="spacingAndGlyphs" >Diapositivas</text><line x1="345.5" y1="68" x2="345.5" y2="156" stroke="#C8C6C4" stroke-width="1" /><rect x="354.5" y="76.5" width="151.5" height="22" fill="#E1E1E1" stroke="#C8C8C8" stroke-width="1" /><line x1="492.5" y1="77" x2="492.5" y2="98" stroke="#C8C8C8" stroke-width="1" /><path d="M496.5 87.1 L499 88.9 L501.5 87.1" fill="none" stroke="#A6A6A6" stroke-width="1" /><rect x="508.5" y="76.5" width="45" height="22" fill="#E1E1E1" stroke="#C8C8C8" stroke-width="1" /><line x1="540.5" y1="77" x2="540.5" y2="98" stroke="#C8C8C8" stroke-width="1" /><path d="M544.5 87.1 L547 88.9 L549.5 87.1" fill="none" stroke="#A6A6A6" stroke-width="1" /><text x="560" y="92" font-size="15" fill="#A6A6A6" font-family='"Liberation Sans", sans-serif' textLength="10" lengthAdjust="spacingAndGlyphs" >A</text><path d="M572 84 L574 81.5 L576 84" fill="none" stroke="#A6A6A6" stroke-width="0.9" /><text x="585.5" y="92" font-size="12" fill="#A6A6A6" font-family='"Liberation Sans", sans-serif' textLength="8" lengthAdjust="spacingAndGlyphs" >A</text><path d="M596 81 L598 83.5 L600 81" fill="none" stroke="#A6A6A6" stroke-width="0.9" /><line x1="606.5" y1="77" x2="606.5" y2="98" stroke="#C8C6C4" stroke-width="1" /><text x="614" y="91" font-size="14" fill="#A6A6A6" font-family='"Liberation Sans", sans-serif' textLength="9.5" lengthAdjust="spacingAndGlyphs" >A</text><path d="M621 90 L626 85 L630 89 L625 94 Z" fill="none" stroke="#A6A6A6" stroke-width="1" /><text x="359" y="123.5" font-size="13" fill="#A6A6A6" font-family='"Liberation Sans", sans-serif' font-weight="bold" textLength="10" lengthAdjust="spacingAndGlyphs" >N</text><text x="384" y="123.5" font-size="13" fill="#A6A6A6" font-family='"Liberation Sans", sans-serif' textLength="8" lengthAdjust="spacingAndGlyphs" font-style="italic">K</text><text x="409.5" y="122.5" font-size="12.5" fill="#A6A6A6" font-family='"Liberation Sans", sans-serif' textLength="8" lengthAdjust="spacingAndGlyphs" >S</text><line x1="409" y1="125" x2="417" y2="125" stroke="#A6A6A6" stroke-width="1" /><text x="432" y="123.5" font-size="13" fill="#A6A6A6" font-family='"Liberation Sans", sans-serif' font-weight="bold" textLength="8" lengthAdjust="spacingAndGlyphs" >S</text><text x="453.5" y="123" font-size="12" fill="#A6A6A6" font-family='"Liberation Sans", sans-serif' textLength="14" lengthAdjust="spacingAndGlyphs" >ab</text><line x1="453" y1="119" x2="469" y2="119" stroke="#A6A6A6" stroke-width="1" /><text x="477" y="119" font-size="11" fill="#A6A6A6" font-family='"Liberation Sans", sans-serif' textLength="15" lengthAdjust="spacingAndGlyphs" >AV</text><path d="M478 124 H492 M480 122 L478 124 L480 126 M490 122 L492 124 L490 126" fill="none" stroke="#A6A6A6" stroke-width="0.8" /><path d="M498.3 118.6 L500.5 120.4 L502.7 118.6" fill="none" stroke="#A6A6A6" stroke-width="0.9" /><text x="515" y="123.5" font-size="13" fill="#A6A6A6" font-family='"Liberation Sans", sans-serif' textLength="16" lengthAdjust="spacingAndGlyphs" >Aa</text><path d="M537.3 118.6 L539.5 120.4 L541.7 118.6" fill="none" stroke="#A6A6A6" stroke-width="0.9" /><line x1="552.5" y1="110" x2="552.5" y2="130" stroke="#C8C6C4" stroke-width="1" /><path d="M563 121 L570 113 L573 116 L566 124 Z" fill="none" stroke="#A6A6A6" stroke-width="1" /><rect x="560" y="123" width="16" height="3.5" fill="#B3B0AD" /><path d="M583.3 118.6 L585.5 120.4 L587.7 118.6" fill="none" stroke="#A6A6A6" stroke-width="0.9" /><text x="599.5" y="121" font-size="13" fill="#A6A6A6" font-family='"Liberation Sans", sans-serif' textLength="10" lengthAdjust="spacingAndGlyphs" >A</text><rect x="599" y="123" width="16" height="3.5" fill="#B3B0AD" /><path d="M622.3 118.6 L624.5 120.4 L626.7 118.6" fill="none" stroke="#A6A6A6" stroke-width="0.9" /><text x="467.7" y="155.5" font-size="11.5" fill="#3B3A39" font-family='"Liberation Sans", sans-serif' textLength="35" lengthAdjust="spacingAndGlyphs" >Fuente</text><path d="M629 148.5 H636 V155.5 M631 150.5 L635.5 155 M635.5 152 V155 H632.5" fill="none" stroke="#8A8886" stroke-width="0.9" /><line x1="640.5" y1="68" x2="640.5" y2="156" stroke="#C8C6C4" stroke-width="1" /><rect x="652" y="79" width="2.5" height="2.5" fill="#A6A6A6" /><line x1="657" y1="80.5" x2="667" y2="80.5" stroke="#A6A6A6" stroke-width="1" /><rect x="652" y="84" width="2.5" height="2.5" fill="#A6A6A6" /><line x1="657" y1="85.5" x2="667" y2="85.5" stroke="#A6A6A6" stroke-width="1" /><rect x="652" y="89" width="2.5" height="2.5" fill="#A6A6A6" /><line x1="657" y1="90.5" x2="667" y2="90.5" stroke="#A6A6A6" stroke-width="1" /><path d="M675.3 86.1 L677.5 87.9 L679.7 86.1" fill="none" stroke="#A6A6A6" stroke-width="0.9" /><text x="691" y="82" font-size="4.5" fill="#A6A6A6" font-family='"Liberation Sans", sans-serif' >1</text><line x1="696" y1="80.5" x2="706" y2="80.5" stroke="#A6A6A6" stroke-width="1" /><text x="691" y="87" font-size="4.5" fill="#A6A6A6" font-family='"Liberation Sans", sans-serif' >2</text><line x1="696" y1="85.5" x2="706" y2="85.5" stroke="#A6A6A6" stroke-width="1" /><text x="691" y="92" font-size="4.5" fill="#A6A6A6" font-family='"Liberation Sans", sans-serif' >3</text><line x1="696" y1="90.5" x2="706" y2="90.5" stroke="#A6A6A6" stroke-width="1" /><path d="M714.3 86.1 L716.5 87.9 L718.7 86.1" fill="none" stroke="#A6A6A6" stroke-width="0.9" /><line x1="729.5" y1="77" x2="729.5" y2="98" stroke="#C8C6C4" stroke-width="1" /><path d="M738 80.5 H752 M745 85.5 H752 M745 88.5 H752 M738 93.5 H752 M742 84 L739 87 L742 90" fill="none" stroke="#A6A6A6" stroke-width="1" /><path d="M762 80.5 H776 M769 85.5 H776 M769 88.5 H776 M762 93.5 H776 M763 87 H767 M765 85 L767 87 L765 89" fill="none" stroke="#A6A6A6" stroke-width="1" /><line x1="784.5" y1="77" x2="784.5" y2="98" stroke="#C8C6C4" stroke-width="1" /><path d="M799 80.5 H808 M799 85.5 H808 M799 90.5 H808 M794 79 V93 M792 81 L794 79 L796 81 M792 91 L794 93 L796 91" fill="none" stroke="#A6A6A6" stroke-width="1" /><path d="M813.3 86.1 L815.5 87.9 L817.7 86.1" fill="none" stroke="#A6A6A6" stroke-width="0.9" /><path d="M831 72 V86 M829 84 L831 86 L833 84 M840 78 V86 M838 84 L840 86 L842 84" fill="none" stroke="#A6A6A6" stroke-width="1" /><text x="836" y="77" font-size="6" fill="#A6A6A6" font-family='"Liberation Sans", sans-serif' >A</text><text x="847.4" y="83.9" font-size="12" fill="#A6A6A6" font-family='"Liberation Sans", sans-serif' textLength="98.3" lengthAdjust="spacingAndGlyphs" >Dirección del texto</text><path d="M950.3 78.6 L952.5 80.4 L954.7 78.6" fill="none" stroke="#A6A6A6" stroke-width="0.9" /><path d="M831 97 H829 V109 H831 M841 97 H843 V109 H841 M836 96 V110 M834 98 L836 96 L838 98 M834 108 L836 110 L838 108" fill="none" stroke="#A6A6A6" stroke-width="1" /><text x="847.4" y="107.6" font-size="12" fill="#A6A6A6" font-family='"Liberation Sans", sans-serif' textLength="66" lengthAdjust="spacingAndGlyphs" >Alinear texto</text><path d="M918.3 102.6 L920.5 104.4 L922.7 102.6" fill="none" stroke="#A6A6A6" stroke-width="0.9" /><path d="M829 121 H838 L841 124 M830 121 L835 126" fill="none" stroke="#A6A6A6" stroke-width="1" /><rect x="834.5" y="125.5" width="8.5" height="6.5" fill="none" stroke="#A6A6A6" stroke-width="1" /><text x="847.4" y="131.8" font-size="12" fill="#A6A6A6" font-family='"Liberation Sans", sans-serif' textLength="107.4" lengthAdjust="spacingAndGlyphs" >Convertir a SmartArt</text><path d="M960.3 126.6 L962.5 128.4 L964.7 126.6" fill="none" stroke="#A6A6A6" stroke-width="0.9" /><line x1="653" y1="112.5" x2="667" y2="112.5" stroke="#A6A6A6" stroke-width="1" /><line x1="653" y1="116.5" x2="663" y2="116.5" stroke="#A6A6A6" stroke-width="1" /><line x1="653" y1="120.5" x2="667" y2="120.5" stroke="#A6A6A6" stroke-width="1" /><line x1="653" y1="124.5" x2="663" y2="124.5" stroke="#A6A6A6" stroke-width="1" /><line x1="677.0" y1="112.5" x2="691.0" y2="112.5" stroke="#A6A6A6" stroke-width="1" /><line x1="679.0" y1="116.5" x2="689.0" y2="116.5" stroke="#A6A6A6" stroke-width="1" /><line x1="677.0" y1="120.5" x2="691.0" y2="120.5" stroke="#A6A6A6" stroke-width="1" /><line x1="679.0" y1="124.5" x2="689.0" y2="124.5" stroke="#A6A6A6" stroke-width="1" /><line x1="701" y1="112.5" x2="715" y2="112.5" stroke="#A6A6A6" stroke-width="1" /><line x1="705" y1="116.5" x2="715" y2="116.5" stroke="#A6A6A6" stroke-width="1" /><line x1="701" y1="120.5" x2="715" y2="120.5" stroke="#A6A6A6" stroke-width="1" /><line x1="705" y1="124.5" x2="715" y2="124.5" stroke="#A6A6A6" stroke-width="1" /><line x1="725" y1="112.5" x2="739" y2="112.5" stroke="#A6A6A6" stroke-width="1" /><line x1="725" y1="116.5" x2="739" y2="116.5" stroke="#A6A6A6" stroke-width="1" /><line x1="725" y1="120.5" x2="739" y2="120.5" stroke="#A6A6A6" stroke-width="1" /><line x1="725" y1="124.5" x2="739" y2="124.5" stroke="#A6A6A6" stroke-width="1" /><line x1="747.5" y1="110" x2="747.5" y2="130" stroke="#C8C6C4" stroke-width="1" /><path d="M757 115.5 H762 M764 115.5 H769 M757 118.5 H762 M764 118.5 H769 M757 121.5 H762 M764 121.5 H769" fill="none" stroke="#A6A6A6" stroke-width="0.9" /><path d="M776.3 118.1 L778.5 119.9 L780.7 118.1" fill="none" stroke="#A6A6A6" stroke-width="0.9" /><text x="784.5" y="155.5" font-size="11.5" fill="#3B3A39" font-family='"Liberation Sans", sans-serif' textLength="36" lengthAdjust="spacingAndGlyphs" >Párrafo</text><path d="M969 148.5 H976 V155.5 M971 150.5 L975.5 155 M975.5 152 V155 H972.5" fill="none" stroke="#8A8886" stroke-width="0.9" /><line x1="980.5" y1="68" x2="980.5" y2="156" stroke="#C8C6C4" stroke-width="1" /><rect x="990.5" y="70.5" width="123" height="61" fill="#FFFFFF" stroke="#C8C6C4" stroke-width="1" /><rect x="1113.5" y="71.5" width="14" height="20" fill="#F3F2F1" stroke="#C8C6C4" stroke-width="1" /><rect x="1113.5" y="91.5" width="14" height="20" fill="#F3F2F1" stroke="#C8C6C4" stroke-width="1" /><rect x="1113.5" y="111.5" width="14" height="20" fill="#F3F2F1" stroke="#C8C6C4" stroke-width="1" /><path d="M1117.5 82.5 L1120.5 79.5 L1123.5 82.5" fill="none" stroke="#B0B0B0" stroke-width="1" /><path d="M1118.0 99.5 L1120.5 101.5 L1123.0 99.5" fill="none" stroke="#444" stroke-width="1" /><path d="M1117 119 H1124 M1117.5 121 L1120.5 124 L1123.5 121" fill="none" stroke="#444" stroke-width="1" /><rect x="995.5" y="74.5" width="12" height="12" fill="none" stroke="#2B88D8" stroke-width="1" /><text x="998.5" y="84.5" font-size="9" fill="#2B88D8" font-family='"Liberation Sans", sans-serif' font-weight="bold" >A</text><rect x="994.3" y="73.3" width="2.4" height="2.4" fill="#FFFFFF" stroke="#2B88D8" stroke-width="0.8" /><rect x="1006.3" y="73.3" width="2.4" height="2.4" fill="#FFFFFF" stroke="#2B88D8" stroke-width="0.8" /><rect x="994.3" y="85.3" width="2.4" height="2.4" fill="#FFFFFF" stroke="#2B88D8" stroke-width="0.8" /><rect x="1006.3" y="85.3" width="2.4" height="2.4" fill="#FFFFFF" stroke="#2B88D8" stroke-width="0.8" /><line x1="1015" y1="75" x2="1029" y2="88" stroke="#444" stroke-width="1" /><path d="M1035 75 L1049 88 M1044 88 H1049 V83" fill="none" stroke="#444" stroke-width="1" /><rect x="1054.5" y="75.5" width="15" height="11" fill="none" stroke="#444" stroke-width="1" /><ellipse cx="1082" cy="81" rx="7.5" ry="5.5" fill="none" stroke="#444" stroke-width="1"/><rect x="1094.5" y="75.5" width="15" height="11" fill="none" stroke="#444" stroke-width="1" rx="3" /><path d="M1001.5 94.5 L995 108 H1008 Z" fill="none" stroke="#444" stroke-width="1" /><path d="M1015 94.5 H1021.5 V107.5 H1029" fill="none" stroke="#444" stroke-width="1" /><path d="M1034 94.5 H1040.5 V107.5 H1049 M1047 105.5 L1049 107.5 L1047 109.5" fill="none" stroke="#444" stroke-width="1" /><path d="M1054 98 H1062 V95 L1069 101 L1062 107 V104 H1054 Z" fill="none" stroke="#444" stroke-width="1" /><path d="M1079 94.5 H1085 V102 H1088 L1082 108.5 L1076 102 H1079 Z" fill="none" stroke="#444" stroke-width="1" /><path d="M1094.5 107.5 V97 L1098 94.5 H1104 Q1110 96 1106 101 Q1110 103 1109 107.5 Z" fill="none" stroke="#444" stroke-width="1" /><path d="M1005 116 C998 114 995 120 1000 122 C1006 124 1004 117 998 119 C994 121 1000 128 1006 125" fill="none" stroke="#444" stroke-width="1" /><path d="M1014 116 C1022 116 1028 121 1029 128" fill="none" stroke="#444" stroke-width="1" /><path d="M1034 128 C1037 118 1040 114 1042 116 C1044 119 1046 127 1050 128" fill="none" stroke="#444" stroke-width="1" /><text x="1058.5" y="126" font-size="14" fill="#444" font-family='"Liberation Sans", sans-serif' >{</text><text x="1077.5" y="126" font-size="14" fill="#444" font-family='"Liberation Sans", sans-serif' >}</text><path d="M1102.0 114.5 L1103.8 119.1 L1108.7 119.3 L1104.9 122.4 L1106.1 127.2 L1102.0 124.5 L1097.9 127.2 L1099.1 122.4 L1095.3 119.3 L1100.2 119.1 Z" fill="none" stroke="#444" stroke-width="1" /><rect x="1145.5" y="72.5" width="12" height="10" fill="#FFFFFF" stroke="#262626" stroke-width="1" /><path d="M1151 82.5 V91.5 H1160.5 M1157.5 77 H1164.5 V89" fill="none" stroke="#E8900F" stroke-width="1.1" fill="#F8D38B"/><rect x="1151.5" y="77.5" width="13" height="14" fill="#F9D78F" /><path d="M1151.5 82.5 V91.5 H1160 M1157.5 77.5 H1164.5 V88" fill="none" stroke="#E8900F" stroke-width="1.1" /><rect x="1145.5" y="72.5" width="12" height="10" fill="#FFFFFF" stroke="#262626" stroke-width="1" /><rect x="1160.5" y="88.5" width="12" height="10" fill="#FFFFFF" stroke="#262626" stroke-width="1" /><text x="1133" y="116.7" font-size="12" fill="#262626" font-family='"Liberation Sans", sans-serif' textLength="51" lengthAdjust="spacingAndGlyphs" >Organizar</text><path d="M1156.0 127.5 L1158.5 129.5 L1161.0 127.5" fill="none" stroke="#262626" stroke-width="1" /><rect x="1200.5" y="72.5" width="27" height="27" fill="#EDEBE9" stroke="#B3B0AD" stroke-width="1" rx="2" /><path d="M1211 100 C1212 96 1215 95 1217 96 L1230 83 L1231 85 L1219 98 C1218 101 1214 102 1211 100 Z" fill="#D2D0CE" stroke="#B3B0AD" stroke-width="1" /><text x="1198" y="116.7" font-size="12" fill="#A6A6A6" font-family='"Liberation Sans", sans-serif' textLength="33" lengthAdjust="spacingAndGlyphs" >Estilos</text><text x="1189" y="132" font-size="12" fill="#A6A6A6" font-family='"Liberation Sans", sans-serif' textLength="39" lengthAdjust="spacingAndGlyphs" >rápidos</text><path d="M1232.8 127.1 L1235 128.9 L1237.2 127.1" fill="none" stroke="#A6A6A6" stroke-width="0.9" /><path d="M1249 78 L1254 72 L1259 78 L1254 83 Z M1253 72 L1252 70" fill="none" stroke="#A6A6A6" stroke-width="1" /><rect x="1245" y="84" width="16" height="3" fill="#B3B0AD" /><text x="1264.4" y="82.8" font-size="12" fill="#A6A6A6" font-family='"Liberation Sans", sans-serif' textLength="89.6" lengthAdjust="spacingAndGlyphs" >Relleno de forma</text><path d="M1358.8 78.1 L1361 79.9 L1363.2 78.1" fill="none" stroke="#A6A6A6" stroke-width="0.9" /><path d="M1246 94 V103 M1249 100 L1257 92 L1259 94 L1251 102 Z" fill="none" stroke="#A6A6A6" stroke-width="1" /><rect x="1245" y="107" width="16" height="3" fill="#B3B0AD" /><text x="1264.4" y="105.75" font-size="12" fill="#A6A6A6" font-family='"Liberation Sans", sans-serif' textLength="101.6" lengthAdjust="spacingAndGlyphs" >Contorno de forma</text><path d="M1370.8 101.1 L1373 102.9 L1375.2 101.1" fill="none" stroke="#A6A6A6" stroke-width="0.9" /><path d="M1246 125 L1252 118 H1260 L1254 125 Z M1246 125 V129 H1254 L1260 122 V118 M1254 125 V129" fill="none" stroke="#A6A6A6" stroke-width="1" /><text x="1264.4" y="128.7" font-size="12" fill="#A6A6A6" font-family='"Liberation Sans", sans-serif' textLength="88.6" lengthAdjust="spacingAndGlyphs" >Efectos de forma</text><path d="M1357.8 124.1 L1360 125.9 L1362.2 124.1" fill="none" stroke="#A6A6A6" stroke-width="0.9" /><text x="1159.4" y="155.5" font-size="11.5" fill="#3B3A39" font-family='"Liberation Sans", sans-serif' textLength="34" lengthAdjust="spacingAndGlyphs" >Dibujo</text><path d="M1378 148.5 H1385 V155.5 M1380 150.5 L1384.5 155 M1384.5 152 V155 H1381.5" fill="none" stroke="#8A8886" stroke-width="0.9" /><line x1="1389.5" y1="68" x2="1389.5" y2="156" stroke="#C8C6C4" stroke-width="1" /><circle cx="1411" cy="76" r="5" fill="none" stroke="#262626" stroke-width="1.1" /><line x1="1402.5" y1="85.5" x2="1407.5" y2="80.2" stroke="#262626" stroke-width="1.2" /><text x="1420.5" y="82.8" font-size="12" fill="#262626" font-family='"Liberation Sans", sans-serif' textLength="34.3" lengthAdjust="spacingAndGlyphs" >Buscar</text><text x="1408" y="99" font-size="7.5" fill="#B146C2" font-family='"Liberation Sans", sans-serif' >b</text><path d="M1405 95 C1400 98 1400 103 1405 106 M1403 104 L1405 106 L1403 108" fill="none" stroke="#2B88D8" stroke-width="1" /><text x="1408" y="109" font-size="8" fill="#2B88D8" font-family='"Liberation Sans", sans-serif' >c</text><text x="1420.5" y="105.75" font-size="12" fill="#262626" font-family='"Liberation Sans", sans-serif' textLength="60.1" lengthAdjust="spacingAndGlyphs" >Reemplazar</text><path d="M1491.5 100.0 L1494 102.0 L1496.5 100.0" fill="none" stroke="#262626" stroke-width="1" /><path d="M1403.5 117 V131 L1406.5 128 L1409 133 L1411 132 L1408.5 127 H1412.5 Z" fill="none" stroke="#262626" stroke-width="1" stroke-linejoin="round"/><text x="1420.5" y="128.9" font-size="12" fill="#262626" font-family='"Liberation Sans", sans-serif' textLength="59.3" lengthAdjust="spacingAndGlyphs" >Seleccionar</text><path d="M1484.5 123.5 L1487 125.5 L1489.5 123.5" fill="none" stroke="#262626" stroke-width="1" /><text x="1431.4" y="155.5" font-size="11.5" fill="#3B3A39" font-family='"Liberation Sans", sans-serif' textLength="37" lengthAdjust="spacingAndGlyphs" >Edición</text><line x1="1511.5" y1="68" x2="1511.5" y2="156" stroke="#C8C6C4" stroke-width="1" /><path d="M1533 74 H1544 L1550 80 V89 M1544 99.5 H1533 V74" fill="none" stroke="#3C78D8" stroke-width="1.3" /><path d="M1544 74 V80 H1550" fill="none" stroke="#3C78D8" stroke-width="1" /><path d="M1537 89 C1539 83 1540 80 1540 78 C1541 82 1544 86 1546 86" fill="none" stroke="#3C78D8" stroke-width="0.8" /><path d="M1545 96 L1553 88 A3 3 0 0 1 1557 92 L1551 98 M1549 94 L1544 99 A3 3 0 0 0 1548 103 L1552 99" fill="none" stroke="#3C78D8" stroke-width="1.3" /><path d="M1604 74 H1615 L1621 80 V89 M1615 99.5 H1604 V74" fill="none" stroke="#3C78D8" stroke-width="1.3" /><path d="M1615 74 V80 H1621" fill="none" stroke="#3C78D8" stroke-width="1" /><path d="M1608 89 C1610 83 1611 80 1611 78 C1612 82 1615 86 1617 86" fill="none" stroke="#3C78D8" stroke-width="0.8" /><path d="M1616 96 L1624 88 A3 3 0 0 1 1628 92 L1622 98 M1620 94 L1615 99 A3 3 0 0 0 1619 103 L1623 99" fill="none" stroke="#3C78D8" stroke-width="1.3" /><text x="1527.5" y="117" font-size="12" fill="#262626" font-family='"Liberation Sans", sans-serif' textLength="27.3" lengthAdjust="spacingAndGlyphs" >Crear</text><text x="1522.8" y="132.6" font-size="12" fill="#262626" font-family='"Liberation Sans", sans-serif' textLength="36.7" lengthAdjust="spacingAndGlyphs" >un PDF</text><text x="1573.6" y="117" font-size="12" fill="#262626" font-family='"Liberation Sans", sans-serif' textLength="77.4" lengthAdjust="spacingAndGlyphs" >Crear un PDF y</text><text x="1565.8" y="132.6" font-size="12" fill="#262626" font-family='"Liberation Sans", sans-serif' textLength="93" lengthAdjust="spacingAndGlyphs" >compartir vínculo</text><text x="1552.5" y="155.5" font-size="11.5" fill="#3B3A39" font-family='"Liberation Sans", sans-serif' textLength="76.3" lengthAdjust="spacingAndGlyphs" >Adobe Acrobat</text><line x1="1669.5" y1="68" x2="1669.5" y2="156" stroke="#C8C6C4" stroke-width="1" /><path d="M1900 155 L1905 150 L1910 155" fill="none" stroke="#444" stroke-width="1.1" /><rect x="290" y="166" width="1" height="842" fill="#C8C8C8" /><rect x="290" y="1007" width="1630" height="1" fill="#C6C6C6" /><rect x="0" y="1010" width="1920" height="1" fill="#C6C6C6" /><rect x="0" y="1011" width="1920" height="22" fill="#F3F2F1" /><rect x="450" y="166" width="1385" height="13" fill="#FFFFFF" /><rect x="455" y="172" width="1" height="1" fill="#555555" /><rect x="465" y="170" width="1" height="4" fill="#555555" /><rect x="475" y="172" width="1" height="1" fill="#555555" /><text x="484.86" y="176" font-size="10" fill="#444" font-family='"Liberation Sans", sans-serif' text-anchor="middle" >16</text><rect x="496" y="172" width="1" height="1" fill="#555555" /><rect x="506" y="170" width="1" height="4" fill="#555555" /><rect x="516" y="172" width="1" height="1" fill="#555555" /><text x="525.9" y="176" font-size="10" fill="#444" font-family='"Liberation Sans", sans-serif' text-anchor="middle" >15</text><rect x="537" y="172" width="1" height="1" fill="#555555" /><rect x="547" y="170" width="1" height="4" fill="#555555" /><rect x="557" y="172" width="1" height="1" fill="#555555" /><text x="566.94" y="176" font-size="10" fill="#444" font-family='"Liberation Sans", sans-serif' text-anchor="middle" >14</text><rect x="578" y="172" width="1" height="1" fill="#555555" /><rect x="588" y="170" width="1" height="4" fill="#555555" /><rect x="598" y="172" width="1" height="1" fill="#555555" /><text x="607.98" y="176" font-size="10" fill="#444" font-family='"Liberation Sans", sans-serif' text-anchor="middle" >13</text><rect x="619" y="172" width="1" height="1" fill="#555555" /><rect x="629" y="170" width="1" height="4" fill="#555555" /><rect x="639" y="172" width="1" height="1" fill="#555555" /><text x="649.02" y="176" font-size="10" fill="#444" font-family='"Liberation Sans", sans-serif' text-anchor="middle" >12</text><rect x="660" y="172" width="1" height="1" fill="#555555" /><rect x="670" y="170" width="1" height="4" fill="#555555" /><rect x="680" y="172" width="1" height="1" fill="#555555" /><text x="690.06" y="176" font-size="10" fill="#444" font-family='"Liberation Sans", sans-serif' text-anchor="middle" >11</text><rect x="701" y="172" width="1" height="1" fill="#555555" /><rect x="711" y="170" width="1" height="4" fill="#555555" /><rect x="721" y="172" width="1" height="1" fill="#555555" /><text x="731.1" y="176" font-size="10" fill="#444" font-family='"Liberation Sans", sans-serif' text-anchor="middle" >10</text><rect x="742" y="172" width="1" height="1" fill="#555555" /><rect x="752" y="170" width="1" height="4" fill="#555555" /><rect x="762" y="172" width="1" height="1" fill="#555555" /><text x="772.14" y="176" font-size="10" fill="#444" font-family='"Liberation Sans", sans-serif' text-anchor="middle" >9</text><rect x="783" y="172" width="1" height="1" fill="#555555" /><rect x="793" y="170" width="1" height="4" fill="#555555" /><rect x="803" y="172" width="1" height="1" fill="#555555" /><text x="813.1800000000001" y="176" font-size="10" fill="#444" font-family='"Liberation Sans", sans-serif' text-anchor="middle" >8</text><rect x="824" y="172" width="1" height="1" fill="#555555" /><rect x="834" y="170" width="1" height="4" fill="#555555" /><rect x="844" y="172" width="1" height="1" fill="#555555" /><text x="854.22" y="176" font-size="10" fill="#444" font-family='"Liberation Sans", sans-serif' text-anchor="middle" >7</text><rect x="865" y="172" width="1" height="1" fill="#555555" /><rect x="875" y="170" width="1" height="4" fill="#555555" /><rect x="886" y="172" width="1" height="1" fill="#555555" /><text x="895.26" y="176" font-size="10" fill="#444" font-family='"Liberation Sans", sans-serif' text-anchor="middle" >6</text><rect x="906" y="172" width="1" height="1" fill="#555555" /><rect x="916" y="170" width="1" height="4" fill="#555555" /><rect x="927" y="172" width="1" height="1" fill="#555555" /><text x="936.3" y="176" font-size="10" fill="#444" font-family='"Liberation Sans", sans-serif' text-anchor="middle" >5</text><rect x="947" y="172" width="1" height="1" fill="#555555" /><rect x="957" y="170" width="1" height="4" fill="#555555" /><rect x="968" y="172" width="1" height="1" fill="#555555" /><text x="977.34" y="176" font-size="10" fill="#444" font-family='"Liberation Sans", sans-serif' text-anchor="middle" >4</text><rect x="988" y="172" width="1" height="1" fill="#555555" /><rect x="998" y="170" width="1" height="4" fill="#555555" /><rect x="1009" y="172" width="1" height="1" fill="#555555" /><text x="1018.38" y="176" font-size="10" fill="#444" font-family='"Liberation Sans", sans-serif' text-anchor="middle" >3</text><rect x="1029" y="172" width="1" height="1" fill="#555555" /><rect x="1039" y="170" width="1" height="4" fill="#555555" /><rect x="1050" y="172" width="1" height="1" fill="#555555" /><text x="1059.42" y="176" font-size="10" fill="#444" font-family='"Liberation Sans", sans-serif' text-anchor="middle" >2</text><rect x="1070" y="172" width="1" height="1" fill="#555555" /><rect x="1080" y="170" width="1" height="4" fill="#555555" /><rect x="1091" y="172" width="1" height="1" fill="#555555" /><text x="1100.46" y="176" font-size="10" fill="#444" font-family='"Liberation Sans", sans-serif' text-anchor="middle" >1</text><rect x="1111" y="172" width="1" height="1" fill="#555555" /><rect x="1121" y="170" width="1" height="4" fill="#555555" /><rect x="1132" y="172" width="1" height="1" fill="#555555" /><text x="1141.5" y="176" font-size="10" fill="#444" font-family='"Liberation Sans", sans-serif' text-anchor="middle" >0</text><rect x="1152" y="172" width="1" height="1" fill="#555555" /><rect x="1163" y="170" width="1" height="4" fill="#555555" /><rect x="1173" y="172" width="1" height="1" fill="#555555" /><text x="1182.54" y="176" font-size="10" fill="#444" font-family='"Liberation Sans", sans-serif' text-anchor="middle" >1</text><rect x="1193" y="172" width="1" height="1" fill="#555555" /><rect x="1204" y="170" width="1" height="4" fill="#555555" /><rect x="1214" y="172" width="1" height="1" fill="#555555" /><text x="1223.58" y="176" font-size="10" fill="#444" font-family='"Liberation Sans", sans-serif' text-anchor="middle" >2</text><rect x="1234" y="172" width="1" height="1" fill="#555555" /><rect x="1245" y="170" width="1" height="4" fill="#555555" /><rect x="1255" y="172" width="1" height="1" fill="#555555" /><text x="1264.62" y="176" font-size="10" fill="#444" font-family='"Liberation Sans", sans-serif' text-anchor="middle" >3</text><rect x="1275" y="172" width="1" height="1" fill="#555555" /><rect x="1286" y="170" width="1" height="4" fill="#555555" /><rect x="1296" y="172" width="1" height="1" fill="#555555" /><text x="1305.66" y="176" font-size="10" fill="#444" font-family='"Liberation Sans", sans-serif' text-anchor="middle" >4</text><rect x="1316" y="172" width="1" height="1" fill="#555555" /><rect x="1327" y="170" width="1" height="4" fill="#555555" /><rect x="1337" y="172" width="1" height="1" fill="#555555" /><text x="1346.7" y="176" font-size="10" fill="#444" font-family='"Liberation Sans", sans-serif' text-anchor="middle" >5</text><rect x="1357" y="172" width="1" height="1" fill="#555555" /><rect x="1368" y="170" width="1" height="4" fill="#555555" /><rect x="1378" y="172" width="1" height="1" fill="#555555" /><text x="1387.74" y="176" font-size="10" fill="#444" font-family='"Liberation Sans", sans-serif' text-anchor="middle" >6</text><rect x="1399" y="172" width="1" height="1" fill="#555555" /><rect x="1409" y="170" width="1" height="4" fill="#555555" /><rect x="1419" y="172" width="1" height="1" fill="#555555" /><text x="1428.78" y="176" font-size="10" fill="#444" font-family='"Liberation Sans", sans-serif' text-anchor="middle" >7</text><rect x="1440" y="172" width="1" height="1" fill="#555555" /><rect x="1450" y="170" width="1" height="4" fill="#555555" /><rect x="1460" y="172" width="1" height="1" fill="#555555" /><text x="1469.82" y="176" font-size="10" fill="#444" font-family='"Liberation Sans", sans-serif' text-anchor="middle" >8</text><rect x="1481" y="172" width="1" height="1" fill="#555555" /><rect x="1491" y="170" width="1" height="4" fill="#555555" /><rect x="1501" y="172" width="1" height="1" fill="#555555" /><text x="1510.8600000000001" y="176" font-size="10" fill="#444" font-family='"Liberation Sans", sans-serif' text-anchor="middle" >9</text><rect x="1522" y="172" width="1" height="1" fill="#555555" /><rect x="1532" y="170" width="1" height="4" fill="#555555" /><rect x="1542" y="172" width="1" height="1" fill="#555555" /><text x="1551.9" y="176" font-size="10" fill="#444" font-family='"Liberation Sans", sans-serif' text-anchor="middle" >10</text><rect x="1563" y="172" width="1" height="1" fill="#555555" /><rect x="1573" y="170" width="1" height="4" fill="#555555" /><rect x="1583" y="172" width="1" height="1" fill="#555555" /><text x="1592.94" y="176" font-size="10" fill="#444" font-family='"Liberation Sans", sans-serif' text-anchor="middle" >11</text><rect x="1604" y="172" width="1" height="1" fill="#555555" /><rect x="1614" y="170" width="1" height="4" fill="#555555" /><rect x="1624" y="172" width="1" height="1" fill="#555555" /><text x="1633.98" y="176" font-size="10" fill="#444" font-family='"Liberation Sans", sans-serif' text-anchor="middle" >12</text><rect x="1645" y="172" width="1" height="1" fill="#555555" /><rect x="1655" y="170" width="1" height="4" fill="#555555" /><rect x="1665" y="172" width="1" height="1" fill="#555555" /><text x="1675.02" y="176" font-size="10" fill="#444" font-family='"Liberation Sans", sans-serif' text-anchor="middle" >13</text><rect x="1686" y="172" width="1" height="1" fill="#555555" /><rect x="1696" y="170" width="1" height="4" fill="#555555" /><rect x="1706" y="172" width="1" height="1" fill="#555555" /><text x="1716.06" y="176" font-size="10" fill="#444" font-family='"Liberation Sans", sans-serif' text-anchor="middle" >14</text><rect x="1727" y="172" width="1" height="1" fill="#555555" /><rect x="1737" y="170" width="1" height="4" fill="#555555" /><rect x="1747" y="172" width="1" height="1" fill="#555555" /><text x="1757.1" y="176" font-size="10" fill="#444" font-family='"Liberation Sans", sans-serif' text-anchor="middle" >15</text><rect x="1768" y="172" width="1" height="1" fill="#555555" /><rect x="1778" y="170" width="1" height="4" fill="#555555" /><rect x="1788" y="172" width="1" height="1" fill="#555555" /><text x="1798.1399999999999" y="176" font-size="10" fill="#444" font-family='"Liberation Sans", sans-serif' text-anchor="middle" >16</text><rect x="1809" y="172" width="1" height="1" fill="#555555" /><rect x="1819" y="170" width="1" height="4" fill="#555555" /><rect x="1829" y="172" width="1" height="1" fill="#555555" /><rect x="298" y="207" width="13" height="778" fill="#FFFFFF" /><rect x="304" y="216" width="1" height="1" fill="#555555" /><text x="0" y="0" font-size="10" fill="#444" font-family='"Liberation Sans", sans-serif' text-anchor="middle" transform="translate(308,227.1) rotate(-90)">9</text><rect x="304" y="237" width="1" height="1" fill="#555555" /><rect x="302" y="247" width="4" height="1" fill="#555555" /><rect x="304" y="257" width="1" height="1" fill="#555555" /><text x="0" y="0" font-size="10" fill="#444" font-family='"Liberation Sans", sans-serif' text-anchor="middle" transform="translate(308,268.2) rotate(-90)">8</text><rect x="304" y="278" width="1" height="1" fill="#555555" /><rect x="302" y="288" width="4" height="1" fill="#555555" /><rect x="304" y="298" width="1" height="1" fill="#555555" /><text x="0" y="0" font-size="10" fill="#444" font-family='"Liberation Sans", sans-serif' text-anchor="middle" transform="translate(308,309.2) rotate(-90)">7</text><rect x="304" y="319" width="1" height="1" fill="#555555" /><rect x="302" y="329" width="4" height="1" fill="#555555" /><rect x="304" y="340" width="1" height="1" fill="#555555" /><text x="0" y="0" font-size="10" fill="#444" font-family='"Liberation Sans", sans-serif' text-anchor="middle" transform="translate(308,350.3) rotate(-90)">6</text><rect x="304" y="360" width="1" height="1" fill="#555555" /><rect x="302" y="370" width="4" height="1" fill="#555555" /><rect x="304" y="381" width="1" height="1" fill="#555555" /><text x="0" y="0" font-size="10" fill="#444" font-family='"Liberation Sans", sans-serif' text-anchor="middle" transform="translate(308,391.3) rotate(-90)">5</text><rect x="304" y="401" width="1" height="1" fill="#555555" /><rect x="302" y="411" width="4" height="1" fill="#555555" /><rect x="304" y="422" width="1" height="1" fill="#555555" /><text x="0" y="0" font-size="10" fill="#444" font-family='"Liberation Sans", sans-serif' text-anchor="middle" transform="translate(308,432.3) rotate(-90)">4</text><rect x="304" y="442" width="1" height="1" fill="#555555" /><rect x="302" y="452" width="4" height="1" fill="#555555" /><rect x="304" y="463" width="1" height="1" fill="#555555" /><text x="0" y="0" font-size="10" fill="#444" font-family='"Liberation Sans", sans-serif' text-anchor="middle" transform="translate(308,473.4) rotate(-90)">3</text><rect x="304" y="483" width="1" height="1" fill="#555555" /><rect x="302" y="493" width="4" height="1" fill="#555555" /><rect x="304" y="504" width="1" height="1" fill="#555555" /><text x="0" y="0" font-size="10" fill="#444" font-family='"Liberation Sans", sans-serif' text-anchor="middle" transform="translate(308,514.4) rotate(-90)">2</text><rect x="304" y="524" width="1" height="1" fill="#555555" /><rect x="302" y="534" width="4" height="1" fill="#555555" /><rect x="304" y="545" width="1" height="1" fill="#555555" /><text x="0" y="0" font-size="10" fill="#444" font-family='"Liberation Sans", sans-serif' text-anchor="middle" transform="translate(308,555.5) rotate(-90)">1</text><rect x="304" y="565" width="1" height="1" fill="#555555" /><rect x="302" y="575" width="4" height="1" fill="#555555" /><rect x="304" y="586" width="1" height="1" fill="#555555" /><text x="0" y="0" font-size="10" fill="#444" font-family='"Liberation Sans", sans-serif' text-anchor="middle" transform="translate(308,596.5) rotate(-90)">0</text><rect x="304" y="606" width="1" height="1" fill="#555555" /><rect x="302" y="617" width="4" height="1" fill="#555555" /><rect x="304" y="627" width="1" height="1" fill="#555555" /><text x="0" y="0" font-size="10" fill="#444" font-family='"Liberation Sans", sans-serif' text-anchor="middle" transform="translate(308,637.5) rotate(-90)">1</text><rect x="304" y="647" width="1" height="1" fill="#555555" /><rect x="302" y="658" width="4" height="1" fill="#555555" /><rect x="304" y="668" width="1" height="1" fill="#555555" /><text x="0" y="0" font-size="10" fill="#444" font-family='"Liberation Sans", sans-serif' text-anchor="middle" transform="translate(308,678.6) rotate(-90)">2</text><rect x="304" y="688" width="1" height="1" fill="#555555" /><rect x="302" y="699" width="4" height="1" fill="#555555" /><rect x="304" y="709" width="1" height="1" fill="#555555" /><text x="0" y="0" font-size="10" fill="#444" font-family='"Liberation Sans", sans-serif' text-anchor="middle" transform="translate(308,719.6) rotate(-90)">3</text><rect x="304" y="729" width="1" height="1" fill="#555555" /><rect x="302" y="740" width="4" height="1" fill="#555555" /><rect x="304" y="750" width="1" height="1" fill="#555555" /><text x="0" y="0" font-size="10" fill="#444" font-family='"Liberation Sans", sans-serif' text-anchor="middle" transform="translate(308,760.7) rotate(-90)">4</text><rect x="304" y="770" width="1" height="1" fill="#555555" /><rect x="302" y="781" width="4" height="1" fill="#555555" /><rect x="304" y="791" width="1" height="1" fill="#555555" /><text x="0" y="0" font-size="10" fill="#444" font-family='"Liberation Sans", sans-serif' text-anchor="middle" transform="translate(308,801.7) rotate(-90)">5</text><rect x="304" y="811" width="1" height="1" fill="#555555" /><rect x="302" y="822" width="4" height="1" fill="#555555" /><rect x="304" y="832" width="1" height="1" fill="#555555" /><text x="0" y="0" font-size="10" fill="#444" font-family='"Liberation Sans", sans-serif' text-anchor="middle" transform="translate(308,842.7) rotate(-90)">6</text><rect x="304" y="853" width="1" height="1" fill="#555555" /><rect x="302" y="863" width="4" height="1" fill="#555555" /><rect x="304" y="873" width="1" height="1" fill="#555555" /><text x="0" y="0" font-size="10" fill="#444" font-family='"Liberation Sans", sans-serif' text-anchor="middle" transform="translate(308,883.8) rotate(-90)">7</text><rect x="304" y="894" width="1" height="1" fill="#555555" /><rect x="302" y="904" width="4" height="1" fill="#555555" /><rect x="304" y="914" width="1" height="1" fill="#555555" /><text x="0" y="0" font-size="10" fill="#444" font-family='"Liberation Sans", sans-serif' text-anchor="middle" transform="translate(308,924.8) rotate(-90)">8</text><rect x="304" y="935" width="1" height="1" fill="#555555" /><rect x="302" y="945" width="4" height="1" fill="#555555" /><rect x="304" y="955" width="1" height="1" fill="#555555" /><text x="0" y="0" font-size="10" fill="#444" font-family='"Liberation Sans", sans-serif' text-anchor="middle" transform="translate(308,965.9) rotate(-90)">9</text><rect x="304" y="976" width="1" height="1" fill="#555555" /><line x1="298" y1="700.5" x2="311" y2="700.5" stroke="#E04020" stroke-width="1" stroke-dasharray="2 2"/><rect x="1904" y="163" width="15" height="788" fill="#DADADA" /><rect x="1904.5" y="163.5" width="14" height="14" fill="#FFFFFF" stroke="#ABABAB" stroke-width="1" /><path d="M1908 172.5 L1911.5 168.5 L1915 172.5 Z" fill="#606060" /><rect x="1904.5" y="272.5" width="14" height="41" fill="#FFFFFF" stroke="#ABABAB" stroke-width="1" /><rect x="1904.5" y="936.5" width="14" height="14" fill="#FFFFFF" stroke="#ABABAB" stroke-width="1" /><path d="M1908 942 L1911.5 946 L1915 942 Z" fill="#606060" /><path d="M1908 960.5 L1911.5 956.5 L1915 960.5 Z M1908 964.5 L1911.5 960.5 L1915 964.5 Z" fill="#606060" /><path d="M1908 973.5 L1911.5 977.5 L1915 973.5 Z M1908 977.5 L1911.5 981.5 L1915 977.5 Z" fill="#606060" /><text x="15.5" y="190" font-size="14" fill="#D24726" font-family='"Liberation Sans", sans-serif' text-anchor="middle" >1</text><path d="M15.5 195.0 L16.9 198.6 L20.7 198.8 L17.7 201.2 L18.7 204.9 L15.5 202.8 L12.3 204.9 L13.3 201.2 L10.3 198.8 L14.1 198.6 Z" fill="#666666" /><rect x="10" y="197.5" width="2" height="1.5" fill="#666" /><rect x="10" y="201.5" width="2.5" height="1.5" fill="#666" /><text x="15.5" y="342" font-size="14" fill="#444444" font-family='"Liberation Sans", sans-serif' text-anchor="middle" >2</text><path d="M15.5 347.0 L16.9 350.6 L20.7 350.8 L17.7 353.2 L18.7 356.9 L15.5 354.8 L12.3 356.9 L13.3 353.2 L10.3 350.8 L14.1 350.6 Z" fill="#666666" /><rect x="10" y="349.5" width="2" height="1.5" fill="#666" /><rect x="10" y="353.5" width="2.5" height="1.5" fill="#666" /><text x="15.5" y="494" font-size="14" fill="#444444" font-family='"Liberation Sans", sans-serif' text-anchor="middle" >3</text><path d="M15.5 499.0 L16.9 502.6 L20.7 502.8 L17.7 505.2 L18.7 508.9 L15.5 506.8 L12.3 508.9 L13.3 505.2 L10.3 502.8 L14.1 502.6 Z" fill="#666666" /><rect x="10" y="501.5" width="2" height="1.5" fill="#666" /><rect x="10" y="505.5" width="2.5" height="1.5" fill="#666" /><text x="15.5" y="646" font-size="14" fill="#444444" font-family='"Liberation Sans", sans-serif' text-anchor="middle" >4</text><path d="M15.5 651.0 L16.9 654.6 L20.7 654.8 L17.7 657.2 L18.7 660.9 L15.5 658.8 L12.3 660.9 L13.3 657.2 L10.3 654.8 L14.1 654.6 Z" fill="#666666" /><rect x="10" y="653.5" width="2" height="1.5" fill="#666" /><rect x="10" y="657.5" width="2.5" height="1.5" fill="#666" /><text x="15.5" y="798" font-size="14" fill="#444444" font-family='"Liberation Sans", sans-serif' text-anchor="middle" >5</text><path d="M15.5 803.0 L16.9 806.6 L20.7 806.8 L17.7 809.2 L18.7 812.9 L15.5 810.8 L12.3 812.9 L13.3 809.2 L10.3 806.8 L14.1 806.6 Z" fill="#666666" /><rect x="10" y="805.5" width="2" height="1.5" fill="#666" /><rect x="10" y="809.5" width="2.5" height="1.5" fill="#666" /><text x="8.6" y="1025" font-size="11.5" fill="#444" font-family='"Liberation Sans", sans-serif' textLength="90" lengthAdjust="spacingAndGlyphs" >Diapositiva 1 de 5</text><text x="131.25" y="1025" font-size="11.5" fill="#444" font-family='"Liberation Sans", sans-serif' textLength="85" lengthAdjust="spacingAndGlyphs" >Español (México)</text><path d="M1387 1020.5 H1403 M1387 1024.5 H1403 M1387 1028.5 H1403 M1392 1016 L1395 1013 L1398 1016" fill="none" stroke="#555" stroke-width="1" /><text x="1405.7" y="1026" font-size="12" fill="#444" font-family='"Liberation Sans", sans-serif' textLength="28.8" lengthAdjust="spacingAndGlyphs" >Notas</text><path d="M1455.5 1014.5 H1468.5 V1024.5 H1460 L1457 1027.5 V1024.5 H1455.5 Z" fill="none" stroke="#555" stroke-width="1" /><text x="1472.4" y="1026" font-size="12" fill="#444" font-family='"Liberation Sans", sans-serif' textLength="64.3" lengthAdjust="spacingAndGlyphs" >Comentarios</text><rect x="1556" y="1011" width="40" height="22" fill="#C8C6C4" /><rect x="1569.5" y="1014.5" width="14" height="12" fill="none" stroke="#444" stroke-width="1" /><rect x="1572.5" y="1016.5" width="9" height="5" fill="none" stroke="#444" stroke-width="1" /><rect x="1609.5" y="1014.5" width="5" height="5" fill="none" stroke="#555" stroke-width="1" /><rect x="1617.5" y="1014.5" width="5" height="5" fill="none" stroke="#555" stroke-width="1" /><rect x="1609.5" y="1021.5" width="5" height="5" fill="none" stroke="#555" stroke-width="1" /><rect x="1617.5" y="1021.5" width="5" height="5" fill="none" stroke="#555" stroke-width="1" /><path d="M1649.5 1015.5 Q1652 1014 1655.5 1015.5 Q1659 1014 1662.5 1015.5 V1027.5 Q1659 1026 1655.5 1027.5 Q1652 1026 1649.5 1027.5 Z M1655.5 1015.5 V1027.5" fill="none" stroke="#555" stroke-width="1" /><path d="M1689 1014.5 H1702 M1690.5 1014.5 V1021.5 H1700.5 V1014.5 M1695.5 1021.5 V1027 M1692 1027.5 H1699" fill="none" stroke="#555" stroke-width="1" /><line x1="1721" y1="1021.5" x2="1729" y2="1021.5" stroke="#555" stroke-width="1" /><line x1="1735" y1="1021.5" x2="1835" y2="1021.5" stroke="#777" stroke-width="1" /><rect x="1783" y="1015" width="5" height="12" fill="#777" /><path d="M1843.5 1017 V1026 M1839 1021.5 H1848" fill="none" stroke="#555" stroke-width="1" /><text x="1860" y="1026" font-size="12" fill="#444" font-family='"Liberation Sans", sans-serif' textLength="28" lengthAdjust="spacingAndGlyphs" >109%</text><rect x="1902.5" y="1017.5" width="7" height="8" fill="none" stroke="#555" stroke-width="1" /><path d="M1903.5 1015 L1906 1012.5 L1908.5 1015 M1903.5 1028 L1906 1030.5 L1908.5 1028 M1900 1019 L1898 1021.5 L1900 1024 M1912 1019 L1914 1021.5 L1912 1024" fill="none" stroke="#555" stroke-width="1" /><rect x="1835" y="207" width="1.5" height="780" fill="#D3D8DC" /><rect x="598" y="986" width="1238" height="1.5" fill="#D3D8DC" /><rect x="445" y="188" width="153" height="816" fill="#FFFFFF" /><g clip-path="url(#slc)"><use href="#s1"/></g><circle cx="380.5" cy="442.5" r="47" fill="#FFFFFF" /><g transform="translate(380.5,442.5) scale(1)"><rect x="-28.5" y="-24.5" width="5" height="54" fill="#595959" /><rect x="-28.5" y="24.3" width="55.5" height="5" fill="#595959" /><path d="M-19.8 14.8 L-4.9 1.2 L0.5 7.5 L11.4 -2.8 L16 3.4 L22 -3" fill="none" stroke="#595959" stroke-width="5" stroke-linejoin="miter"/><path d="M12.5 -11 H26.3 V2.8 Z" fill="#595959" /></g><circle cx="380.5" cy="597" r="47" fill="#FFFFFF" /><g transform="translate(380.5,597) scale(1)"><path d="M-22.5 -10 H16 V26.7 Q16 29.7 13 29.7 H-19.5 Q-22.5 29.7 -22.5 26.7 Z" fill="#595959" /><path d="M15 -1.5 A8.5 8.5 0 0 1 15 15.5" fill="none" stroke="#595959" stroke-width="5" /><path d="M-12.5 -15 C-9.0 -18 -9.0 -20 -12.5 -23 C-16.0 -26 -16.0 -28 -12.5 -31" fill="none" stroke="#595959" stroke-width="2.6" stroke-linecap="round"/><path d="M-3.5 -18 C0.0 -21 0.0 -23 -3.5 -26 C-7.0 -29 -7.0 -31 -3.5 -34" fill="none" stroke="#595959" stroke-width="2.6" stroke-linecap="round"/><path d="M4.5 -15 C8.0 -18 8.0 -20 4.5 -23 C1.0 -26 1.0 -28 4.5 -31" fill="none" stroke="#595959" stroke-width="2.6" stroke-linecap="round"/></g><circle cx="380.5" cy="752" r="47" fill="#FFFFFF" /><g transform="translate(380.5,752) scale(1)"><path d="M19.7 -7.4 L26.3 -5.9 L26.3 5.9 L19.7 7.4 L19.1 8.7 L22.8 14.5 L14.5 22.8 L8.7 19.1 L7.4 19.7 L5.9 26.3 L-5.9 26.3 L-7.4 19.7 L-8.7 19.1 L-14.5 22.8 L-22.8 14.5 L-19.1 8.7 L-19.7 7.4 L-26.3 5.9 L-26.3 -5.9 L-19.7 -7.4 L-19.1 -8.7 L-22.8 -14.5 L-14.5 -22.8 L-8.7 -19.1 L-7.4 -19.7 L-5.9 -26.3 L5.9 -26.3 L7.4 -19.7 L8.7 -19.1 L14.5 -22.8 L22.8 -14.5 L19.1 -8.7 Z M9 0 A9 9 0 1 0 -9 0 A9 9 0 1 0 9 0 Z" fill="#595959" fill-rule="evenodd"/></g><circle cx="380.5" cy="906" r="47" fill="#FFFFFF" /><g transform="translate(380.5,906) scale(1)"><circle cx="-18.5" cy="-12" r="7" fill="#595959" /><circle cx="19.5" cy="-12" r="7" fill="#595959" /><path d="M-33 11 V6 Q-33 -2 -18.5 -2 Q-4 -2 -4 6 V11 Z" fill="#595959" /><path d="M5 11 V6 Q5 -2 19.5 -2 Q34 -2 34 6 V11 Z" fill="#595959" /><circle cx="0.5" cy="-0.5" r="9.5" fill="#FFFFFF" /><path d="M-17 24 V17 Q-17 6 0.5 6 Q18 6 18 17 V24 Z" fill="#FFFFFF" /><circle cx="0.5" cy="-0.5" r="7" fill="#595959" /><path d="M-14 23 V17 Q-14 9 0.5 9 Q15 9 15 17 V23 Z" fill="#595959" /></g><line x1="1141.5" y1="188" x2="1141.5" y2="1001" stroke="#9A9A9A" stroke-width="1" stroke-dasharray="3.5 2.5"/><line x1="320" y1="596.5" x2="1901" y2="596.5" stroke="#9A9A9A" stroke-width="1" stroke-dasharray="3.5 2.5"/><rect x="33.5" y="178.5" width="235" height="135" fill="none" stroke="#B7472A" stroke-width="3" /><rect x="35.5" y="180.5" width="231" height="131" fill="none" stroke="#FFFFFF" stroke-width="1" /><svg x="36" y="181" width="230" height="130" viewBox="445 206 1390 780" preserveAspectRatio="none"><use href="#s1"/></svg><rect x="35.5" y="332.5" width="231" height="131" fill="none" stroke="#C8C8C8" stroke-width="1" /><svg x="36" y="333" width="230" height="130" viewBox="445 206 1390 780" preserveAspectRatio="none"><use href="#s2"/></svg><rect x="35.5" y="484.5" width="231" height="131" fill="none" stroke="#C8C8C8" stroke-width="1" /><svg x="36" y="485" width="230" height="130" viewBox="445 206 1390 780" preserveAspectRatio="none"><use href="#s3"/></svg><rect x="35.5" y="636.5" width="231" height="131" fill="none" stroke="#C8C8C8" stroke-width="1" /><svg x="36" y="637" width="230" height="130" viewBox="445 206 1390 780" preserveAspectRatio="none"><use href="#s4"/></svg><rect x="35.5" y="788.5" width="231" height="131" fill="none" stroke="#C8C8C8" stroke-width="1" /><svg x="36" y="789" width="230" height="130" viewBox="445 206 1390 780" preserveAspectRatio="none"><use href="#s5"/></svg></svg></body></html>
